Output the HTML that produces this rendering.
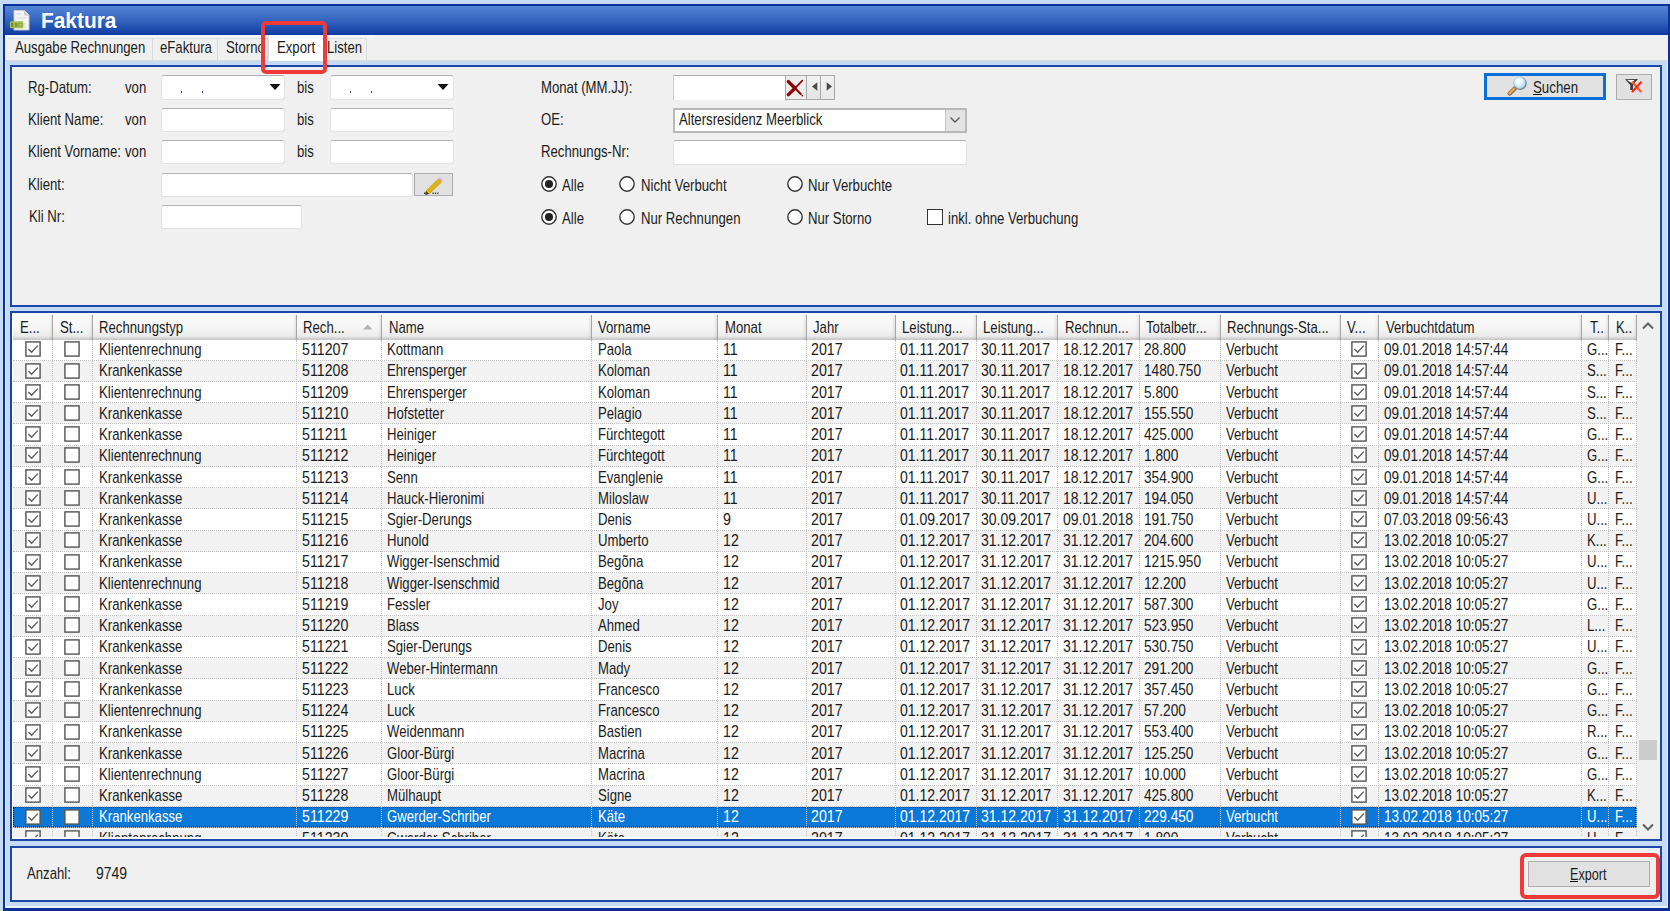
<!DOCTYPE html>
<html><head><meta charset="utf-8"><title>Faktura</title>
<style>
html,body{margin:0;padding:0;width:1670px;height:911px;overflow:hidden;background:#c5daf5}
body{position:relative;font-family:"Liberation Sans",sans-serif}
.r{position:absolute}
.t{position:absolute;white-space:nowrap;line-height:1;transform-origin:0 0}
</style></head><body>
<div class="r" style="left:0px;top:0px;width:1670px;height:911px;background:#c5daf5"></div>
<div class="r" style="left:3px;top:4px;width:1667px;height:907px;background:#0b3196"></div>
<div class="r" style="left:5px;top:6px;width:1663px;height:29px;background:linear-gradient(#5585d4,#3d6ec6 35%,#2455b3 70%,#0e3aa0)"></div>
<div class="r" style="left:5px;top:35px;width:1663px;height:873px;background:#c5daf5"></div>
<div class="r" style="left:5px;top:35px;width:1663px;height:26px;background:#f0f0f0"></div>
<div class="r" style="left:5px;top:35px;width:370px;height:3px;background:#f5f5f5"></div>
<div class="r" style="left:5px;top:60px;width:1663px;height:1px;background:#dadada"></div>
<div class="r" style="left:5px;top:61px;width:1px;height:847px;background:#eef3fb"></div>
<div class="r" style="left:1667px;top:35px;width:1px;height:873px;background:#e9eef6"></div>
<div class="r" style="left:5px;top:906px;width:1663px;height:2px;background:#eef3fb"></div>
<svg class="r" style="left:8px;top:9px" width="24" height="24" viewBox="0 0 24 24">
<path d="M6 1.5 H16.5 L21 6 V21 H6 Z" fill="#f4f4f4" stroke="#c9c9c9" stroke-width="1"/>
<path d="M16.5 1.5 V6 H21" fill="#dcdcdc" stroke="#c9c9c9" stroke-width="1"/>
<path d="M8.5 5 H13 M8.5 9 H18 M8.5 15 H18 M8.5 18 H18" stroke="#d6d6d6" stroke-width="1"/>
<rect x="1.9" y="12.2" width="13.4" height="7" rx="1.2" fill="#a3bd52"/>
<path d="M3.2 13.8 V17.8 H4.6 Q6 15.8 4.6 13.8 Z" fill="#6c8a22"/>
<rect x="7" y="14" width="2.6" height="3.6" fill="#7f9a33"/>
<rect x="10.6" y="14" width="3.4" height="3.6" fill="#8aa53c"/>
<rect x="11.4" y="14.9" width="1.8" height="1.8" fill="#b7cf6a"/>
</svg>
<div class="t" style="left:41.00px;top:9.64px;font-size:21.2px;color:#ffffff;transform:scaleX(0.985);font-weight:700;">Faktura</div>
<div class="r" style="left:8px;top:38px;width:145px;height:22px;background:#f0f0f0;border-top:1px solid #dadada;border-right:1px solid #dadada;box-sizing:border-box"></div>
<div class="r" style="left:153px;top:38px;width:65px;height:22px;background:#f0f0f0;border-top:1px solid #dadada;border-right:1px solid #dadada;box-sizing:border-box"></div>
<div class="r" style="left:218px;top:38px;width:50px;height:22px;background:#f0f0f0;border-top:1px solid #dadada;border-right:1px solid #dadada;box-sizing:border-box"></div>
<div class="r" style="left:268px;top:35px;width:55px;height:26px;background:#ffffff;border-left:1px solid #d9d9d9;box-sizing:border-box"></div>
<div class="r" style="left:323px;top:38px;width:44px;height:22px;background:#f0f0f0;border-top:1px solid #dadada;border-right:1px solid #dadada;box-sizing:border-box"></div>
<div class="t" style="left:14.80px;top:40.30px;font-size:15.7px;color:#1b1b1b;transform:scaleX(0.839);font-weight:400;">Ausgabe Rechnungen</div>
<div class="t" style="left:159.60px;top:40.30px;font-size:15.7px;color:#1b1b1b;transform:scaleX(0.839);font-weight:400;">eFaktura</div>
<div class="t" style="left:225.50px;top:40.30px;font-size:15.7px;color:#1b1b1b;transform:scaleX(0.839);font-weight:400;">Storno</div>
<div class="t" style="left:276.90px;top:40.30px;font-size:15.7px;color:#1b1b1b;transform:scaleX(0.839);font-weight:400;">Export</div>
<div class="t" style="left:326.70px;top:40.30px;font-size:15.7px;color:#1b1b1b;transform:scaleX(0.839);font-weight:400;">Listen</div>
<div class="r" style="left:10px;top:65px;width:1652px;height:241.5px;background:#f0f0f0;border:2px solid #1c46a7;box-sizing:border-box"></div>
<div class="r" style="left:10px;top:311px;width:1652px;height:530px;background:#ffffff;border:2px solid #1c46a7;box-sizing:border-box"></div>
<div class="r" style="left:10px;top:846px;width:1652px;height:56px;background:#f0f0f0;border:2px solid #1c46a7;box-sizing:border-box"></div>
<div class="t" style="left:27.70px;top:79.70px;font-size:15.7px;color:#1b1b1b;transform:scaleX(0.839);font-weight:400;">Rg-Datum:</div>
<div class="t" style="left:125.40px;top:79.70px;font-size:15.7px;color:#1b1b1b;transform:scaleX(0.839);font-weight:400;">von</div>
<div class="t" style="left:27.70px;top:111.70px;font-size:15.7px;color:#1b1b1b;transform:scaleX(0.839);font-weight:400;">Klient Name:</div>
<div class="t" style="left:125.40px;top:111.70px;font-size:15.7px;color:#1b1b1b;transform:scaleX(0.839);font-weight:400;">von</div>
<div class="t" style="left:27.70px;top:144.10px;font-size:15.7px;color:#1b1b1b;transform:scaleX(0.839);font-weight:400;">Klient Vorname:</div>
<div class="t" style="left:125.40px;top:144.10px;font-size:15.7px;color:#1b1b1b;transform:scaleX(0.839);font-weight:400;">von</div>
<div class="t" style="left:27.70px;top:176.50px;font-size:15.7px;color:#1b1b1b;transform:scaleX(0.839);font-weight:400;">Klient:</div>
<div class="t" style="left:28.70px;top:209.10px;font-size:15.7px;color:#1b1b1b;transform:scaleX(0.839);font-weight:400;">Kli Nr:</div>
<div class="t" style="left:297.30px;top:79.70px;font-size:15.7px;color:#1b1b1b;transform:scaleX(0.839);font-weight:400;">bis</div>
<div class="t" style="left:297.30px;top:111.70px;font-size:15.7px;color:#1b1b1b;transform:scaleX(0.839);font-weight:400;">bis</div>
<div class="t" style="left:297.30px;top:144.10px;font-size:15.7px;color:#1b1b1b;transform:scaleX(0.839);font-weight:400;">bis</div>
<div class="r" style="left:161px;top:75px;width:124px;height:25px;background:#fff;border:1px solid #dfe3e8;border-top:1.5px solid #b3b3b3;border-radius:3px;box-sizing:border-box"></div>
<div class="r" style="left:330px;top:75px;width:124px;height:25px;background:#fff;border:1px solid #dfe3e8;border-top:1.5px solid #b3b3b3;border-radius:3px;box-sizing:border-box"></div>
<div class="r" style="left:161px;top:108px;width:124px;height:24px;background:#fff;border:1px solid #dfe3e8;border-top:1.5px solid #b3b3b3;border-radius:3px;box-sizing:border-box"></div>
<div class="r" style="left:330px;top:108px;width:124px;height:24px;background:#fff;border:1px solid #dfe3e8;border-top:1.5px solid #b3b3b3;border-radius:3px;box-sizing:border-box"></div>
<div class="r" style="left:161px;top:140px;width:124px;height:24px;background:#fff;border:1px solid #dfe3e8;border-top:1.5px solid #b3b3b3;border-radius:3px;box-sizing:border-box"></div>
<div class="r" style="left:330px;top:140px;width:124px;height:24px;background:#fff;border:1px solid #dfe3e8;border-top:1.5px solid #b3b3b3;border-radius:3px;box-sizing:border-box"></div>
<div class="r" style="left:161px;top:173px;width:252px;height:24px;background:#fff;border:1px solid #dfe3e8;border-top:1.5px solid #b3b3b3;border-radius:3px;box-sizing:border-box"></div>
<div class="r" style="left:161px;top:205px;width:141px;height:24px;background:#fff;border:1px solid #dfe3e8;border-top:1.5px solid #b3b3b3;border-radius:3px;box-sizing:border-box"></div>
<svg class="r" style="left:269px;top:83px" width="12" height="8" viewBox="0 0 12 8"><path d="M0.5 1 H11.5 L6 7 Z" fill="#111"/></svg>
<svg class="r" style="left:437px;top:83px" width="12" height="8" viewBox="0 0 12 8"><path d="M0.5 1 H11.5 L6 7 Z" fill="#111"/></svg>
<div class="r" style="left:180.65px;top:91px;width:1.6px;height:1.6px;background:#5a3a70"></div>
<div class="r" style="left:201.65px;top:91px;width:1.6px;height:1.6px;background:#5a3a70"></div>
<div class="r" style="left:349.75px;top:91px;width:1.6px;height:1.6px;background:#5a3a70"></div>
<div class="r" style="left:370.75px;top:91px;width:1.6px;height:1.6px;background:#5a3a70"></div>
<div class="r" style="left:414px;top:173px;width:39px;height:23px;background:#e1e1e1;border:1px solid #adadad;box-sizing:border-box"></div>
<svg class="r" style="left:420px;top:174px" width="28" height="22" viewBox="0 0 28 22">
<path d="M9.02 20.09 L5.98 16.91 L18.48 4.91 L21.52 8.09 Z" fill="#e3b20c" stroke="#b38600" stroke-width="0.5"/>
<path d="M18.48 4.91 L19.92 3.52 L22.96 6.70 L21.52 8.09 Z" fill="#e8a0c8"/>
<path d="M9.02 20.09 L5.98 16.91 L5.2 20.9 Z" fill="#4a3a10"/>
<rect x="4" y="18.6" width="1.6" height="1.3" fill="#222"/>
<rect x="12.5" y="18.6" width="1.4" height="1.3" fill="#333"/>
<rect x="14.8" y="18.6" width="1.4" height="1.3" fill="#333"/>
<rect x="17.1" y="18.6" width="1.4" height="1.3" fill="#333"/>
</svg>
<div class="t" style="left:541.10px;top:80.00px;font-size:15.7px;color:#1b1b1b;transform:scaleX(0.839);font-weight:400;">Monat (MM.JJ):</div>
<div class="t" style="left:541.10px;top:112.10px;font-size:15.7px;color:#1b1b1b;transform:scaleX(0.839);font-weight:400;">OE:</div>
<div class="t" style="left:541.10px;top:144.40px;font-size:15.7px;color:#1b1b1b;transform:scaleX(0.839);font-weight:400;">Rechnungs-Nr:</div>
<div class="r" style="left:673px;top:75px;width:112px;height:25px;background:#fff;border-top:1.5px solid #a9a9a9;border-left:1px solid #d0d0d0;box-sizing:border-box"></div>
<div class="r" style="left:785px;top:75px;width:22px;height:25px;background:#eeeeee;border:1px solid #a8a8a8;box-sizing:border-box"></div>
<svg class="r" style="left:786px;top:79px" width="19" height="18" viewBox="0 0 19 18"><g stroke="#8c0606" stroke-linecap="round"><path d="M2.4 2.6 L9 9.2" stroke-width="3.4"/><path d="M8.5 8.7 L14.8 15" stroke-width="2"/><path d="M2.4 15.6 L9 9.2" stroke-width="3.4"/><path d="M8.5 9.7 L15.6 2.4" stroke-width="1.7"/></g><circle cx="16.3" cy="16.6" r="0.9" fill="#8c0606"/><circle cx="16.2" cy="1.6" r="0.9" fill="#8c0606"/></svg>
<div class="r" style="left:806px;top:75px;width:15px;height:25px;background:linear-gradient(#f2f2f2,#e4e4e4);border:1px solid #a8a8a8;box-sizing:border-box"></div>
<div class="r" style="left:820px;top:75px;width:15px;height:25px;background:linear-gradient(#f2f2f2,#e9e9e9);border:1px solid #a8a8a8;box-sizing:border-box"></div>
<svg class="r" style="left:810px;top:81px" width="10" height="12" viewBox="0 0 10 12"><path d="M7.3 1.2 L7.3 9.8 L2 5.5 Z" fill="#4a4a4a"/></svg>
<svg class="r" style="left:824px;top:81px" width="10" height="12" viewBox="0 0 10 12"><path d="M2.7 1.2 L2.7 9.8 L8 5.5 Z" fill="#4a4a4a"/></svg>
<div class="r" style="left:673px;top:108px;width:294px;height:25px;background:#fff;border:2px solid #b8b8b8;box-sizing:border-box"></div>
<div class="r" style="left:945px;top:110px;width:20px;height:21px;background:#e3e3e3;border-left:1px solid #c8c8c8;box-sizing:border-box"></div>
<svg class="r" style="left:949px;top:116px" width="12" height="8" viewBox="0 0 12 8"><path d="M1.5 1.5 L6 6 L10.5 1.5" fill="none" stroke="#555" stroke-width="1.3"/></svg>
<div class="t" style="left:678.90px;top:112.00px;font-size:15.7px;color:#1b1b1b;transform:scaleX(0.839);font-weight:400;">Altersresidenz Meerblick</div>
<div class="r" style="left:673px;top:140px;width:294px;height:25px;background:#fff;border:1px solid #dfe3e8;border-top:1.5px solid #b3b3b3;border-radius:3px;box-sizing:border-box"></div>
<svg class="r" style="left:541px;top:176px" width="16" height="16" viewBox="0 0 16 16"><circle cx="8" cy="8" r="7.2" fill="#fff" stroke="#333" stroke-width="1.4"/><circle cx="8" cy="8" r="4" fill="#222"/></svg>
<div class="t" style="left:562.30px;top:178.10px;font-size:15.7px;color:#1b1b1b;transform:scaleX(0.839);font-weight:400;">Alle</div>
<svg class="r" style="left:619px;top:176px" width="16" height="16" viewBox="0 0 16 16"><circle cx="8" cy="8" r="7.2" fill="#fff" stroke="#333" stroke-width="1.4"/></svg>
<div class="t" style="left:641.00px;top:178.10px;font-size:15.7px;color:#1b1b1b;transform:scaleX(0.839);font-weight:400;">Nicht Verbucht</div>
<svg class="r" style="left:787px;top:176px" width="16" height="16" viewBox="0 0 16 16"><circle cx="8" cy="8" r="7.2" fill="#fff" stroke="#333" stroke-width="1.4"/></svg>
<div class="t" style="left:808.40px;top:178.10px;font-size:15.7px;color:#1b1b1b;transform:scaleX(0.839);font-weight:400;">Nur Verbuchte</div>
<svg class="r" style="left:541px;top:209px" width="16" height="16" viewBox="0 0 16 16"><circle cx="8" cy="8" r="7.2" fill="#fff" stroke="#333" stroke-width="1.4"/><circle cx="8" cy="8" r="4" fill="#222"/></svg>
<div class="t" style="left:562.30px;top:210.60px;font-size:15.7px;color:#1b1b1b;transform:scaleX(0.839);font-weight:400;">Alle</div>
<svg class="r" style="left:619px;top:209px" width="16" height="16" viewBox="0 0 16 16"><circle cx="8" cy="8" r="7.2" fill="#fff" stroke="#333" stroke-width="1.4"/></svg>
<div class="t" style="left:641.00px;top:210.60px;font-size:15.7px;color:#1b1b1b;transform:scaleX(0.839);font-weight:400;">Nur Rechnungen</div>
<svg class="r" style="left:787px;top:209px" width="16" height="16" viewBox="0 0 16 16"><circle cx="8" cy="8" r="7.2" fill="#fff" stroke="#333" stroke-width="1.4"/></svg>
<div class="t" style="left:808.40px;top:210.60px;font-size:15.7px;color:#1b1b1b;transform:scaleX(0.839);font-weight:400;">Nur Storno</div>
<div class="r" style="left:927px;top:209px;width:16px;height:16px;background:#fff;border:1.5px solid #333;box-sizing:border-box"></div>
<div class="t" style="left:947.50px;top:210.60px;font-size:15.7px;color:#1b1b1b;transform:scaleX(0.839);font-weight:400;">inkl. ohne Verbuchung</div>
<div class="r" style="left:1484px;top:73px;width:122px;height:27px;background:#e1e1e1;border:3px solid #0a6fd6;box-sizing:border-box"></div>
<svg class="r" style="left:1504px;top:74px" width="26" height="24" viewBox="0 0 26 24">
<defs><radialGradient id="lg" cx="0.4" cy="0.35" r="0.7"><stop offset="0" stop-color="#ffffff"/><stop offset="0.5" stop-color="#e2f4fd"/><stop offset="1" stop-color="#a9d2ef"/></radialGradient></defs>
<path d="M5.6 19.6 L11 14.2" stroke="#6e6470" stroke-width="4.2" stroke-linecap="round"/>
<path d="M5.4 19.4 L10.2 14.6" stroke="#f6a53c" stroke-width="2.6" stroke-linecap="round"/>
<circle cx="16.2" cy="9.3" r="6.6" fill="#7d8792"/>
<circle cx="15.6" cy="8.7" r="5.6" fill="url(#lg)" stroke="#bcd3e6" stroke-width="0.8"/>
</svg>
<div class="t" style="left:1533.30px;top:78.82px;font-size:16.5px;color:#1b1b1b;transform:scaleX(0.805);font-weight:400;">Suchen</div>
<div class="r" style="left:1533.3px;top:94px;width:8.6px;height:1.2px;background:#111"></div>
<div class="r" style="left:1616px;top:74px;width:36px;height:26px;background:#e1e1e1;border:1px solid #adadad;box-sizing:border-box"></div>
<svg class="r" style="left:1622px;top:76px" width="24" height="20" viewBox="0 0 24 20">
<path d="M3 3.2 L16 3 L11.2 8.5 L10.8 14 L8.3 14 L8.3 9 Z" fill="#3a3a3a"/>
<path d="M5 4.1 L12.5 4.1 L9.9 7.2 Z" fill="#fafafa"/>
<path d="M10.6 6.4 L18.8 15.4" stroke="#ff5a30" stroke-width="2.3" stroke-linecap="round"/>
<path d="M18.8 6.4 L10.6 15.4" stroke="#ff2a0a" stroke-width="2.3" stroke-linecap="round"/>
</svg>
<div class="r" style="left:13px;top:313px;width:1623.5px;height:26.5px;background:linear-gradient(#fbfbfb,#f6f6f6 55%,#ebebeb 86%,#d2d2d2 94%,#c4c4c4)"></div>
<div class="r" style="left:48.5px;top:314.5px;width:3.5px;height:25px;background:linear-gradient(90deg,rgba(0,0,0,0),rgba(0,0,0,0.08))"></div>
<div class="r" style="left:52.0px;top:314.5px;width:1.2px;height:25px;background:#a6a6a6"></div>
<div class="r" style="left:88.5px;top:314.5px;width:3.5px;height:25px;background:linear-gradient(90deg,rgba(0,0,0,0),rgba(0,0,0,0.08))"></div>
<div class="r" style="left:92.0px;top:314.5px;width:1.2px;height:25px;background:#a6a6a6"></div>
<div class="r" style="left:292.5px;top:314.5px;width:3.5px;height:25px;background:linear-gradient(90deg,rgba(0,0,0,0),rgba(0,0,0,0.08))"></div>
<div class="r" style="left:296.0px;top:314.5px;width:1.2px;height:25px;background:#a6a6a6"></div>
<div class="r" style="left:377.5px;top:314.5px;width:3.5px;height:25px;background:linear-gradient(90deg,rgba(0,0,0,0),rgba(0,0,0,0.08))"></div>
<div class="r" style="left:381.0px;top:314.5px;width:1.2px;height:25px;background:#a6a6a6"></div>
<div class="r" style="left:587.5px;top:314.5px;width:3.5px;height:25px;background:linear-gradient(90deg,rgba(0,0,0,0),rgba(0,0,0,0.08))"></div>
<div class="r" style="left:591.0px;top:314.5px;width:1.2px;height:25px;background:#a6a6a6"></div>
<div class="r" style="left:713px;top:314.5px;width:3.5px;height:25px;background:linear-gradient(90deg,rgba(0,0,0,0),rgba(0,0,0,0.08))"></div>
<div class="r" style="left:716.5px;top:314.5px;width:1.2px;height:25px;background:#a6a6a6"></div>
<div class="r" style="left:802px;top:314.5px;width:3.5px;height:25px;background:linear-gradient(90deg,rgba(0,0,0,0),rgba(0,0,0,0.08))"></div>
<div class="r" style="left:805.5px;top:314.5px;width:1.2px;height:25px;background:#a6a6a6"></div>
<div class="r" style="left:891px;top:314.5px;width:3.5px;height:25px;background:linear-gradient(90deg,rgba(0,0,0,0),rgba(0,0,0,0.08))"></div>
<div class="r" style="left:894.5px;top:314.5px;width:1.2px;height:25px;background:#a6a6a6"></div>
<div class="r" style="left:972px;top:314.5px;width:3.5px;height:25px;background:linear-gradient(90deg,rgba(0,0,0,0),rgba(0,0,0,0.08))"></div>
<div class="r" style="left:975.5px;top:314.5px;width:1.2px;height:25px;background:#a6a6a6"></div>
<div class="r" style="left:1053px;top:314.5px;width:3.5px;height:25px;background:linear-gradient(90deg,rgba(0,0,0,0),rgba(0,0,0,0.08))"></div>
<div class="r" style="left:1056.5px;top:314.5px;width:1.2px;height:25px;background:#a6a6a6"></div>
<div class="r" style="left:1135px;top:314.5px;width:3.5px;height:25px;background:linear-gradient(90deg,rgba(0,0,0,0),rgba(0,0,0,0.08))"></div>
<div class="r" style="left:1138.5px;top:314.5px;width:1.2px;height:25px;background:#a6a6a6"></div>
<div class="r" style="left:1216px;top:314.5px;width:3.5px;height:25px;background:linear-gradient(90deg,rgba(0,0,0,0),rgba(0,0,0,0.08))"></div>
<div class="r" style="left:1219.5px;top:314.5px;width:1.2px;height:25px;background:#a6a6a6"></div>
<div class="r" style="left:1336.7px;top:314.5px;width:3.5px;height:25px;background:linear-gradient(90deg,rgba(0,0,0,0),rgba(0,0,0,0.08))"></div>
<div class="r" style="left:1340.2px;top:314.5px;width:1.2px;height:25px;background:#a6a6a6"></div>
<div class="r" style="left:1374.6px;top:314.5px;width:3.5px;height:25px;background:linear-gradient(90deg,rgba(0,0,0,0),rgba(0,0,0,0.08))"></div>
<div class="r" style="left:1378.1px;top:314.5px;width:1.2px;height:25px;background:#a6a6a6"></div>
<div class="r" style="left:1577.5px;top:314.5px;width:3.5px;height:25px;background:linear-gradient(90deg,rgba(0,0,0,0),rgba(0,0,0,0.08))"></div>
<div class="r" style="left:1581.0px;top:314.5px;width:1.2px;height:25px;background:#a6a6a6"></div>
<div class="r" style="left:1604.5px;top:314.5px;width:3.5px;height:25px;background:linear-gradient(90deg,rgba(0,0,0,0),rgba(0,0,0,0.08))"></div>
<div class="r" style="left:1608.0px;top:314.5px;width:1.2px;height:25px;background:#a6a6a6"></div>
<div class="r" style="left:1632.5px;top:314.5px;width:3.5px;height:25px;background:linear-gradient(90deg,rgba(0,0,0,0),rgba(0,0,0,0.08))"></div>
<div class="r" style="left:1636.0px;top:314.5px;width:1.2px;height:25px;background:#a6a6a6"></div>
<div class="t" style="left:20.20px;top:319.50px;font-size:15.7px;color:#1b1b1b;transform:scaleX(0.839);font-weight:400;">E...</div>
<div class="t" style="left:59.50px;top:319.50px;font-size:15.7px;color:#1b1b1b;transform:scaleX(0.839);font-weight:400;">St...</div>
<div class="t" style="left:99.00px;top:319.50px;font-size:15.7px;color:#1b1b1b;transform:scaleX(0.839);font-weight:400;">Rechnungstyp</div>
<div class="t" style="left:303.00px;top:319.50px;font-size:15.7px;color:#1b1b1b;transform:scaleX(0.839);font-weight:400;">Rech...</div>
<div class="t" style="left:388.60px;top:319.50px;font-size:15.7px;color:#1b1b1b;transform:scaleX(0.839);font-weight:400;">Name</div>
<div class="t" style="left:598.30px;top:319.50px;font-size:15.7px;color:#1b1b1b;transform:scaleX(0.839);font-weight:400;">Vorname</div>
<div class="t" style="left:725.00px;top:319.50px;font-size:15.7px;color:#1b1b1b;transform:scaleX(0.839);font-weight:400;">Monat</div>
<div class="t" style="left:812.80px;top:319.50px;font-size:15.7px;color:#1b1b1b;transform:scaleX(0.839);font-weight:400;">Jahr</div>
<div class="t" style="left:902.40px;top:319.50px;font-size:15.7px;color:#1b1b1b;transform:scaleX(0.839);font-weight:400;">Leistung...</div>
<div class="t" style="left:983.30px;top:319.50px;font-size:15.7px;color:#1b1b1b;transform:scaleX(0.839);font-weight:400;">Leistung...</div>
<div class="t" style="left:1065.00px;top:319.50px;font-size:15.7px;color:#1b1b1b;transform:scaleX(0.839);font-weight:400;">Rechnun...</div>
<div class="t" style="left:1146.40px;top:319.50px;font-size:15.7px;color:#1b1b1b;transform:scaleX(0.839);font-weight:400;">Totalbetr...</div>
<div class="t" style="left:1227.00px;top:319.50px;font-size:15.7px;color:#1b1b1b;transform:scaleX(0.839);font-weight:400;">Rechnungs-Sta...</div>
<div class="t" style="left:1347.30px;top:319.50px;font-size:15.7px;color:#1b1b1b;transform:scaleX(0.839);font-weight:400;">V...</div>
<div class="t" style="left:1386.10px;top:319.50px;font-size:15.7px;color:#1b1b1b;transform:scaleX(0.839);font-weight:400;">Verbuchtdatum</div>
<div class="t" style="left:1590.40px;top:319.50px;font-size:15.7px;color:#1b1b1b;transform:scaleX(0.839);font-weight:400;">T..</div>
<div class="t" style="left:1615.70px;top:319.50px;font-size:15.7px;color:#1b1b1b;transform:scaleX(0.839);font-weight:400;">K..</div>
<svg class="r" style="left:363px;top:324px" width="10" height="6" viewBox="0 0 10 6"><path d="M0 5.5 L4.7 0.5 L9.5 5.5 Z" fill="#b3b3b3"/></svg>
<div class="r" style="left:13px;top:339.5px;width:1623.5px;height:497.79999999999995px;overflow:hidden">
<div style="position:absolute;left:0;top:0.00px;width:1623.5px;height:21.24px;background:#ffffff"></div>
<div style="position:absolute;left:0;top:20.24px;width:1623.5px;height:0;border-top:1px dotted #c2c2c2"></div>
<div class="t" style="left:85.80px;top:2.60px;font-size:15.7px;color:#1b1b1b;transform:scaleX(0.839)">Klientenrechnung</div>
<div class="t" style="left:288.60px;top:2.60px;font-size:15.7px;color:#1b1b1b;transform:scaleX(0.90612)">511207</div>
<div class="t" style="left:374.30px;top:2.60px;font-size:15.7px;color:#1b1b1b;transform:scaleX(0.839)">Kottmann</div>
<div class="t" style="left:584.50px;top:2.60px;font-size:15.7px;color:#1b1b1b;transform:scaleX(0.839)">Paola</div>
<div class="t" style="left:710.40px;top:2.60px;font-size:15.7px;color:#1b1b1b;transform:scaleX(0.90612)">11</div>
<div class="t" style="left:798.20px;top:2.60px;font-size:15.7px;color:#1b1b1b;transform:scaleX(0.90612)">2017</div>
<div class="t" style="left:887.00px;top:2.60px;font-size:15.7px;color:#1b1b1b;transform:scaleX(0.893535)">01.11.2017</div>
<div class="t" style="left:968.20px;top:2.60px;font-size:15.7px;color:#1b1b1b;transform:scaleX(0.893535)">30.11.2017</div>
<div class="t" style="left:1049.80px;top:2.60px;font-size:15.7px;color:#1b1b1b;transform:scaleX(0.893535)">18.12.2017</div>
<div class="t" style="left:1131.10px;top:2.60px;font-size:15.7px;color:#1b1b1b;transform:scaleX(0.87256)">28.800</div>
<div class="t" style="left:1213.20px;top:2.60px;font-size:15.7px;color:#1b1b1b;transform:scaleX(0.839)">Verbucht</div>
<div class="t" style="left:1370.50px;top:2.60px;font-size:15.7px;color:#1b1b1b;transform:scaleX(0.86417)">09.01.2018 14:57:44</div>
<div class="t" style="left:1573.70px;top:2.60px;font-size:15.7px;color:#1b1b1b;transform:scaleX(0.839)">G...</div>
<div class="t" style="left:1601.70px;top:2.60px;font-size:15.7px;color:#1b1b1b;transform:scaleX(0.839)">F...</div>
<svg style="position:absolute;left:11.60px;top:1.80px" width="16" height="16" viewBox="0 0 16 16"><rect x="0.9" y="0.9" width="14.2" height="14.2" fill="#fff" stroke="#545454" stroke-width="1.4"/><path d="M3.4 8 L6.6 11.3 L12.8 4.6" fill="none" stroke="#5a5a5a" stroke-width="1.35"/></svg>
<svg style="position:absolute;left:51.40px;top:1.80px" width="16" height="16" viewBox="0 0 16 16"><rect x="0.9" y="0.9" width="14.2" height="14.2" fill="#fff" stroke="#545454" stroke-width="1.4"/></svg>
<svg style="position:absolute;left:1338.20px;top:1.80px" width="16" height="16" viewBox="0 0 16 16"><rect x="0.9" y="0.9" width="14.2" height="14.2" fill="#fff" stroke="#545454" stroke-width="1.4"/><path d="M3.4 8 L6.6 11.3 L12.8 4.6" fill="none" stroke="#5a5a5a" stroke-width="1.35"/></svg>
<div style="position:absolute;left:0;top:21.24px;width:1623.5px;height:21.24px;background:#f2f2f2"></div>
<div style="position:absolute;left:0;top:41.48px;width:1623.5px;height:0;border-top:1px dotted #c2c2c2"></div>
<div class="t" style="left:85.80px;top:23.84px;font-size:15.7px;color:#1b1b1b;transform:scaleX(0.839)">Krankenkasse</div>
<div class="t" style="left:288.60px;top:23.84px;font-size:15.7px;color:#1b1b1b;transform:scaleX(0.90612)">511208</div>
<div class="t" style="left:374.30px;top:23.84px;font-size:15.7px;color:#1b1b1b;transform:scaleX(0.839)">Ehrensperger</div>
<div class="t" style="left:584.50px;top:23.84px;font-size:15.7px;color:#1b1b1b;transform:scaleX(0.839)">Koloman</div>
<div class="t" style="left:710.40px;top:23.84px;font-size:15.7px;color:#1b1b1b;transform:scaleX(0.90612)">11</div>
<div class="t" style="left:798.20px;top:23.84px;font-size:15.7px;color:#1b1b1b;transform:scaleX(0.90612)">2017</div>
<div class="t" style="left:887.00px;top:23.84px;font-size:15.7px;color:#1b1b1b;transform:scaleX(0.893535)">01.11.2017</div>
<div class="t" style="left:968.20px;top:23.84px;font-size:15.7px;color:#1b1b1b;transform:scaleX(0.893535)">30.11.2017</div>
<div class="t" style="left:1049.80px;top:23.84px;font-size:15.7px;color:#1b1b1b;transform:scaleX(0.893535)">18.12.2017</div>
<div class="t" style="left:1131.10px;top:23.84px;font-size:15.7px;color:#1b1b1b;transform:scaleX(0.87256)">1480.750</div>
<div class="t" style="left:1213.20px;top:23.84px;font-size:15.7px;color:#1b1b1b;transform:scaleX(0.839)">Verbucht</div>
<div class="t" style="left:1370.50px;top:23.84px;font-size:15.7px;color:#1b1b1b;transform:scaleX(0.86417)">09.01.2018 14:57:44</div>
<div class="t" style="left:1573.70px;top:23.84px;font-size:15.7px;color:#1b1b1b;transform:scaleX(0.839)">S...</div>
<div class="t" style="left:1601.70px;top:23.84px;font-size:15.7px;color:#1b1b1b;transform:scaleX(0.839)">F...</div>
<svg style="position:absolute;left:11.60px;top:23.04px" width="16" height="16" viewBox="0 0 16 16"><rect x="0.9" y="0.9" width="14.2" height="14.2" fill="#fff" stroke="#545454" stroke-width="1.4"/><path d="M3.4 8 L6.6 11.3 L12.8 4.6" fill="none" stroke="#5a5a5a" stroke-width="1.35"/></svg>
<svg style="position:absolute;left:51.40px;top:23.04px" width="16" height="16" viewBox="0 0 16 16"><rect x="0.9" y="0.9" width="14.2" height="14.2" fill="#fff" stroke="#545454" stroke-width="1.4"/></svg>
<svg style="position:absolute;left:1338.20px;top:23.04px" width="16" height="16" viewBox="0 0 16 16"><rect x="0.9" y="0.9" width="14.2" height="14.2" fill="#fff" stroke="#545454" stroke-width="1.4"/><path d="M3.4 8 L6.6 11.3 L12.8 4.6" fill="none" stroke="#5a5a5a" stroke-width="1.35"/></svg>
<div style="position:absolute;left:0;top:42.48px;width:1623.5px;height:21.24px;background:#ffffff"></div>
<div style="position:absolute;left:0;top:62.71px;width:1623.5px;height:0;border-top:1px dotted #c2c2c2"></div>
<div class="t" style="left:85.80px;top:45.08px;font-size:15.7px;color:#1b1b1b;transform:scaleX(0.839)">Klientenrechnung</div>
<div class="t" style="left:288.60px;top:45.08px;font-size:15.7px;color:#1b1b1b;transform:scaleX(0.90612)">511209</div>
<div class="t" style="left:374.30px;top:45.08px;font-size:15.7px;color:#1b1b1b;transform:scaleX(0.839)">Ehrensperger</div>
<div class="t" style="left:584.50px;top:45.08px;font-size:15.7px;color:#1b1b1b;transform:scaleX(0.839)">Koloman</div>
<div class="t" style="left:710.40px;top:45.08px;font-size:15.7px;color:#1b1b1b;transform:scaleX(0.90612)">11</div>
<div class="t" style="left:798.20px;top:45.08px;font-size:15.7px;color:#1b1b1b;transform:scaleX(0.90612)">2017</div>
<div class="t" style="left:887.00px;top:45.08px;font-size:15.7px;color:#1b1b1b;transform:scaleX(0.893535)">01.11.2017</div>
<div class="t" style="left:968.20px;top:45.08px;font-size:15.7px;color:#1b1b1b;transform:scaleX(0.893535)">30.11.2017</div>
<div class="t" style="left:1049.80px;top:45.08px;font-size:15.7px;color:#1b1b1b;transform:scaleX(0.893535)">18.12.2017</div>
<div class="t" style="left:1131.10px;top:45.08px;font-size:15.7px;color:#1b1b1b;transform:scaleX(0.87256)">5.800</div>
<div class="t" style="left:1213.20px;top:45.08px;font-size:15.7px;color:#1b1b1b;transform:scaleX(0.839)">Verbucht</div>
<div class="t" style="left:1370.50px;top:45.08px;font-size:15.7px;color:#1b1b1b;transform:scaleX(0.86417)">09.01.2018 14:57:44</div>
<div class="t" style="left:1573.70px;top:45.08px;font-size:15.7px;color:#1b1b1b;transform:scaleX(0.839)">S...</div>
<div class="t" style="left:1601.70px;top:45.08px;font-size:15.7px;color:#1b1b1b;transform:scaleX(0.839)">F...</div>
<svg style="position:absolute;left:11.60px;top:44.28px" width="16" height="16" viewBox="0 0 16 16"><rect x="0.9" y="0.9" width="14.2" height="14.2" fill="#fff" stroke="#545454" stroke-width="1.4"/><path d="M3.4 8 L6.6 11.3 L12.8 4.6" fill="none" stroke="#5a5a5a" stroke-width="1.35"/></svg>
<svg style="position:absolute;left:51.40px;top:44.28px" width="16" height="16" viewBox="0 0 16 16"><rect x="0.9" y="0.9" width="14.2" height="14.2" fill="#fff" stroke="#545454" stroke-width="1.4"/></svg>
<svg style="position:absolute;left:1338.20px;top:44.28px" width="16" height="16" viewBox="0 0 16 16"><rect x="0.9" y="0.9" width="14.2" height="14.2" fill="#fff" stroke="#545454" stroke-width="1.4"/><path d="M3.4 8 L6.6 11.3 L12.8 4.6" fill="none" stroke="#5a5a5a" stroke-width="1.35"/></svg>
<div style="position:absolute;left:0;top:63.71px;width:1623.5px;height:21.24px;background:#f2f2f2"></div>
<div style="position:absolute;left:0;top:83.95px;width:1623.5px;height:0;border-top:1px dotted #c2c2c2"></div>
<div class="t" style="left:85.80px;top:66.32px;font-size:15.7px;color:#1b1b1b;transform:scaleX(0.839)">Krankenkasse</div>
<div class="t" style="left:288.60px;top:66.32px;font-size:15.7px;color:#1b1b1b;transform:scaleX(0.90612)">511210</div>
<div class="t" style="left:374.30px;top:66.32px;font-size:15.7px;color:#1b1b1b;transform:scaleX(0.839)">Hofstetter</div>
<div class="t" style="left:584.50px;top:66.32px;font-size:15.7px;color:#1b1b1b;transform:scaleX(0.839)">Pelagio</div>
<div class="t" style="left:710.40px;top:66.32px;font-size:15.7px;color:#1b1b1b;transform:scaleX(0.90612)">11</div>
<div class="t" style="left:798.20px;top:66.32px;font-size:15.7px;color:#1b1b1b;transform:scaleX(0.90612)">2017</div>
<div class="t" style="left:887.00px;top:66.32px;font-size:15.7px;color:#1b1b1b;transform:scaleX(0.893535)">01.11.2017</div>
<div class="t" style="left:968.20px;top:66.32px;font-size:15.7px;color:#1b1b1b;transform:scaleX(0.893535)">30.11.2017</div>
<div class="t" style="left:1049.80px;top:66.32px;font-size:15.7px;color:#1b1b1b;transform:scaleX(0.893535)">18.12.2017</div>
<div class="t" style="left:1131.10px;top:66.32px;font-size:15.7px;color:#1b1b1b;transform:scaleX(0.87256)">155.550</div>
<div class="t" style="left:1213.20px;top:66.32px;font-size:15.7px;color:#1b1b1b;transform:scaleX(0.839)">Verbucht</div>
<div class="t" style="left:1370.50px;top:66.32px;font-size:15.7px;color:#1b1b1b;transform:scaleX(0.86417)">09.01.2018 14:57:44</div>
<div class="t" style="left:1573.70px;top:66.32px;font-size:15.7px;color:#1b1b1b;transform:scaleX(0.839)">S...</div>
<div class="t" style="left:1601.70px;top:66.32px;font-size:15.7px;color:#1b1b1b;transform:scaleX(0.839)">F...</div>
<svg style="position:absolute;left:11.60px;top:65.51px" width="16" height="16" viewBox="0 0 16 16"><rect x="0.9" y="0.9" width="14.2" height="14.2" fill="#fff" stroke="#545454" stroke-width="1.4"/><path d="M3.4 8 L6.6 11.3 L12.8 4.6" fill="none" stroke="#5a5a5a" stroke-width="1.35"/></svg>
<svg style="position:absolute;left:51.40px;top:65.51px" width="16" height="16" viewBox="0 0 16 16"><rect x="0.9" y="0.9" width="14.2" height="14.2" fill="#fff" stroke="#545454" stroke-width="1.4"/></svg>
<svg style="position:absolute;left:1338.20px;top:65.51px" width="16" height="16" viewBox="0 0 16 16"><rect x="0.9" y="0.9" width="14.2" height="14.2" fill="#fff" stroke="#545454" stroke-width="1.4"/><path d="M3.4 8 L6.6 11.3 L12.8 4.6" fill="none" stroke="#5a5a5a" stroke-width="1.35"/></svg>
<div style="position:absolute;left:0;top:84.95px;width:1623.5px;height:21.24px;background:#ffffff"></div>
<div style="position:absolute;left:0;top:105.19px;width:1623.5px;height:0;border-top:1px dotted #c2c2c2"></div>
<div class="t" style="left:85.80px;top:87.55px;font-size:15.7px;color:#1b1b1b;transform:scaleX(0.839)">Krankenkasse</div>
<div class="t" style="left:288.60px;top:87.55px;font-size:15.7px;color:#1b1b1b;transform:scaleX(0.90612)">511211</div>
<div class="t" style="left:374.30px;top:87.55px;font-size:15.7px;color:#1b1b1b;transform:scaleX(0.839)">Heiniger</div>
<div class="t" style="left:584.50px;top:87.55px;font-size:15.7px;color:#1b1b1b;transform:scaleX(0.839)">Fürchtegott</div>
<div class="t" style="left:710.40px;top:87.55px;font-size:15.7px;color:#1b1b1b;transform:scaleX(0.90612)">11</div>
<div class="t" style="left:798.20px;top:87.55px;font-size:15.7px;color:#1b1b1b;transform:scaleX(0.90612)">2017</div>
<div class="t" style="left:887.00px;top:87.55px;font-size:15.7px;color:#1b1b1b;transform:scaleX(0.893535)">01.11.2017</div>
<div class="t" style="left:968.20px;top:87.55px;font-size:15.7px;color:#1b1b1b;transform:scaleX(0.893535)">30.11.2017</div>
<div class="t" style="left:1049.80px;top:87.55px;font-size:15.7px;color:#1b1b1b;transform:scaleX(0.893535)">18.12.2017</div>
<div class="t" style="left:1131.10px;top:87.55px;font-size:15.7px;color:#1b1b1b;transform:scaleX(0.87256)">425.000</div>
<div class="t" style="left:1213.20px;top:87.55px;font-size:15.7px;color:#1b1b1b;transform:scaleX(0.839)">Verbucht</div>
<div class="t" style="left:1370.50px;top:87.55px;font-size:15.7px;color:#1b1b1b;transform:scaleX(0.86417)">09.01.2018 14:57:44</div>
<div class="t" style="left:1573.70px;top:87.55px;font-size:15.7px;color:#1b1b1b;transform:scaleX(0.839)">G...</div>
<div class="t" style="left:1601.70px;top:87.55px;font-size:15.7px;color:#1b1b1b;transform:scaleX(0.839)">F...</div>
<svg style="position:absolute;left:11.60px;top:86.75px" width="16" height="16" viewBox="0 0 16 16"><rect x="0.9" y="0.9" width="14.2" height="14.2" fill="#fff" stroke="#545454" stroke-width="1.4"/><path d="M3.4 8 L6.6 11.3 L12.8 4.6" fill="none" stroke="#5a5a5a" stroke-width="1.35"/></svg>
<svg style="position:absolute;left:51.40px;top:86.75px" width="16" height="16" viewBox="0 0 16 16"><rect x="0.9" y="0.9" width="14.2" height="14.2" fill="#fff" stroke="#545454" stroke-width="1.4"/></svg>
<svg style="position:absolute;left:1338.20px;top:86.75px" width="16" height="16" viewBox="0 0 16 16"><rect x="0.9" y="0.9" width="14.2" height="14.2" fill="#fff" stroke="#545454" stroke-width="1.4"/><path d="M3.4 8 L6.6 11.3 L12.8 4.6" fill="none" stroke="#5a5a5a" stroke-width="1.35"/></svg>
<div style="position:absolute;left:0;top:106.19px;width:1623.5px;height:21.24px;background:#f2f2f2"></div>
<div style="position:absolute;left:0;top:126.43px;width:1623.5px;height:0;border-top:1px dotted #c2c2c2"></div>
<div class="t" style="left:85.80px;top:108.79px;font-size:15.7px;color:#1b1b1b;transform:scaleX(0.839)">Klientenrechnung</div>
<div class="t" style="left:288.60px;top:108.79px;font-size:15.7px;color:#1b1b1b;transform:scaleX(0.90612)">511212</div>
<div class="t" style="left:374.30px;top:108.79px;font-size:15.7px;color:#1b1b1b;transform:scaleX(0.839)">Heiniger</div>
<div class="t" style="left:584.50px;top:108.79px;font-size:15.7px;color:#1b1b1b;transform:scaleX(0.839)">Fürchtegott</div>
<div class="t" style="left:710.40px;top:108.79px;font-size:15.7px;color:#1b1b1b;transform:scaleX(0.90612)">11</div>
<div class="t" style="left:798.20px;top:108.79px;font-size:15.7px;color:#1b1b1b;transform:scaleX(0.90612)">2017</div>
<div class="t" style="left:887.00px;top:108.79px;font-size:15.7px;color:#1b1b1b;transform:scaleX(0.893535)">01.11.2017</div>
<div class="t" style="left:968.20px;top:108.79px;font-size:15.7px;color:#1b1b1b;transform:scaleX(0.893535)">30.11.2017</div>
<div class="t" style="left:1049.80px;top:108.79px;font-size:15.7px;color:#1b1b1b;transform:scaleX(0.893535)">18.12.2017</div>
<div class="t" style="left:1131.10px;top:108.79px;font-size:15.7px;color:#1b1b1b;transform:scaleX(0.87256)">1.800</div>
<div class="t" style="left:1213.20px;top:108.79px;font-size:15.7px;color:#1b1b1b;transform:scaleX(0.839)">Verbucht</div>
<div class="t" style="left:1370.50px;top:108.79px;font-size:15.7px;color:#1b1b1b;transform:scaleX(0.86417)">09.01.2018 14:57:44</div>
<div class="t" style="left:1573.70px;top:108.79px;font-size:15.7px;color:#1b1b1b;transform:scaleX(0.839)">G...</div>
<div class="t" style="left:1601.70px;top:108.79px;font-size:15.7px;color:#1b1b1b;transform:scaleX(0.839)">F...</div>
<svg style="position:absolute;left:11.60px;top:107.99px" width="16" height="16" viewBox="0 0 16 16"><rect x="0.9" y="0.9" width="14.2" height="14.2" fill="#fff" stroke="#545454" stroke-width="1.4"/><path d="M3.4 8 L6.6 11.3 L12.8 4.6" fill="none" stroke="#5a5a5a" stroke-width="1.35"/></svg>
<svg style="position:absolute;left:51.40px;top:107.99px" width="16" height="16" viewBox="0 0 16 16"><rect x="0.9" y="0.9" width="14.2" height="14.2" fill="#fff" stroke="#545454" stroke-width="1.4"/></svg>
<svg style="position:absolute;left:1338.20px;top:107.99px" width="16" height="16" viewBox="0 0 16 16"><rect x="0.9" y="0.9" width="14.2" height="14.2" fill="#fff" stroke="#545454" stroke-width="1.4"/><path d="M3.4 8 L6.6 11.3 L12.8 4.6" fill="none" stroke="#5a5a5a" stroke-width="1.35"/></svg>
<div style="position:absolute;left:0;top:127.43px;width:1623.5px;height:21.24px;background:#ffffff"></div>
<div style="position:absolute;left:0;top:147.67px;width:1623.5px;height:0;border-top:1px dotted #c2c2c2"></div>
<div class="t" style="left:85.80px;top:130.03px;font-size:15.7px;color:#1b1b1b;transform:scaleX(0.839)">Krankenkasse</div>
<div class="t" style="left:288.60px;top:130.03px;font-size:15.7px;color:#1b1b1b;transform:scaleX(0.90612)">511213</div>
<div class="t" style="left:374.30px;top:130.03px;font-size:15.7px;color:#1b1b1b;transform:scaleX(0.839)">Senn</div>
<div class="t" style="left:584.50px;top:130.03px;font-size:15.7px;color:#1b1b1b;transform:scaleX(0.839)">Evanglenie</div>
<div class="t" style="left:710.40px;top:130.03px;font-size:15.7px;color:#1b1b1b;transform:scaleX(0.90612)">11</div>
<div class="t" style="left:798.20px;top:130.03px;font-size:15.7px;color:#1b1b1b;transform:scaleX(0.90612)">2017</div>
<div class="t" style="left:887.00px;top:130.03px;font-size:15.7px;color:#1b1b1b;transform:scaleX(0.893535)">01.11.2017</div>
<div class="t" style="left:968.20px;top:130.03px;font-size:15.7px;color:#1b1b1b;transform:scaleX(0.893535)">30.11.2017</div>
<div class="t" style="left:1049.80px;top:130.03px;font-size:15.7px;color:#1b1b1b;transform:scaleX(0.893535)">18.12.2017</div>
<div class="t" style="left:1131.10px;top:130.03px;font-size:15.7px;color:#1b1b1b;transform:scaleX(0.87256)">354.900</div>
<div class="t" style="left:1213.20px;top:130.03px;font-size:15.7px;color:#1b1b1b;transform:scaleX(0.839)">Verbucht</div>
<div class="t" style="left:1370.50px;top:130.03px;font-size:15.7px;color:#1b1b1b;transform:scaleX(0.86417)">09.01.2018 14:57:44</div>
<div class="t" style="left:1573.70px;top:130.03px;font-size:15.7px;color:#1b1b1b;transform:scaleX(0.839)">G...</div>
<div class="t" style="left:1601.70px;top:130.03px;font-size:15.7px;color:#1b1b1b;transform:scaleX(0.839)">F...</div>
<svg style="position:absolute;left:11.60px;top:129.23px" width="16" height="16" viewBox="0 0 16 16"><rect x="0.9" y="0.9" width="14.2" height="14.2" fill="#fff" stroke="#545454" stroke-width="1.4"/><path d="M3.4 8 L6.6 11.3 L12.8 4.6" fill="none" stroke="#5a5a5a" stroke-width="1.35"/></svg>
<svg style="position:absolute;left:51.40px;top:129.23px" width="16" height="16" viewBox="0 0 16 16"><rect x="0.9" y="0.9" width="14.2" height="14.2" fill="#fff" stroke="#545454" stroke-width="1.4"/></svg>
<svg style="position:absolute;left:1338.20px;top:129.23px" width="16" height="16" viewBox="0 0 16 16"><rect x="0.9" y="0.9" width="14.2" height="14.2" fill="#fff" stroke="#545454" stroke-width="1.4"/><path d="M3.4 8 L6.6 11.3 L12.8 4.6" fill="none" stroke="#5a5a5a" stroke-width="1.35"/></svg>
<div style="position:absolute;left:0;top:148.67px;width:1623.5px;height:21.24px;background:#f2f2f2"></div>
<div style="position:absolute;left:0;top:168.90px;width:1623.5px;height:0;border-top:1px dotted #c2c2c2"></div>
<div class="t" style="left:85.80px;top:151.27px;font-size:15.7px;color:#1b1b1b;transform:scaleX(0.839)">Krankenkasse</div>
<div class="t" style="left:288.60px;top:151.27px;font-size:15.7px;color:#1b1b1b;transform:scaleX(0.90612)">511214</div>
<div class="t" style="left:374.30px;top:151.27px;font-size:15.7px;color:#1b1b1b;transform:scaleX(0.839)">Hauck-Hieronimi</div>
<div class="t" style="left:584.50px;top:151.27px;font-size:15.7px;color:#1b1b1b;transform:scaleX(0.839)">Miloslaw</div>
<div class="t" style="left:710.40px;top:151.27px;font-size:15.7px;color:#1b1b1b;transform:scaleX(0.90612)">11</div>
<div class="t" style="left:798.20px;top:151.27px;font-size:15.7px;color:#1b1b1b;transform:scaleX(0.90612)">2017</div>
<div class="t" style="left:887.00px;top:151.27px;font-size:15.7px;color:#1b1b1b;transform:scaleX(0.893535)">01.11.2017</div>
<div class="t" style="left:968.20px;top:151.27px;font-size:15.7px;color:#1b1b1b;transform:scaleX(0.893535)">30.11.2017</div>
<div class="t" style="left:1049.80px;top:151.27px;font-size:15.7px;color:#1b1b1b;transform:scaleX(0.893535)">18.12.2017</div>
<div class="t" style="left:1131.10px;top:151.27px;font-size:15.7px;color:#1b1b1b;transform:scaleX(0.87256)">194.050</div>
<div class="t" style="left:1213.20px;top:151.27px;font-size:15.7px;color:#1b1b1b;transform:scaleX(0.839)">Verbucht</div>
<div class="t" style="left:1370.50px;top:151.27px;font-size:15.7px;color:#1b1b1b;transform:scaleX(0.86417)">09.01.2018 14:57:44</div>
<div class="t" style="left:1573.70px;top:151.27px;font-size:15.7px;color:#1b1b1b;transform:scaleX(0.839)">U...</div>
<div class="t" style="left:1601.70px;top:151.27px;font-size:15.7px;color:#1b1b1b;transform:scaleX(0.839)">F...</div>
<svg style="position:absolute;left:11.60px;top:150.47px" width="16" height="16" viewBox="0 0 16 16"><rect x="0.9" y="0.9" width="14.2" height="14.2" fill="#fff" stroke="#545454" stroke-width="1.4"/><path d="M3.4 8 L6.6 11.3 L12.8 4.6" fill="none" stroke="#5a5a5a" stroke-width="1.35"/></svg>
<svg style="position:absolute;left:51.40px;top:150.47px" width="16" height="16" viewBox="0 0 16 16"><rect x="0.9" y="0.9" width="14.2" height="14.2" fill="#fff" stroke="#545454" stroke-width="1.4"/></svg>
<svg style="position:absolute;left:1338.20px;top:150.47px" width="16" height="16" viewBox="0 0 16 16"><rect x="0.9" y="0.9" width="14.2" height="14.2" fill="#fff" stroke="#545454" stroke-width="1.4"/><path d="M3.4 8 L6.6 11.3 L12.8 4.6" fill="none" stroke="#5a5a5a" stroke-width="1.35"/></svg>
<div style="position:absolute;left:0;top:169.90px;width:1623.5px;height:21.24px;background:#ffffff"></div>
<div style="position:absolute;left:0;top:190.14px;width:1623.5px;height:0;border-top:1px dotted #c2c2c2"></div>
<div class="t" style="left:85.80px;top:172.51px;font-size:15.7px;color:#1b1b1b;transform:scaleX(0.839)">Krankenkasse</div>
<div class="t" style="left:288.60px;top:172.51px;font-size:15.7px;color:#1b1b1b;transform:scaleX(0.90612)">511215</div>
<div class="t" style="left:374.30px;top:172.51px;font-size:15.7px;color:#1b1b1b;transform:scaleX(0.839)">Sgier-Derungs</div>
<div class="t" style="left:584.50px;top:172.51px;font-size:15.7px;color:#1b1b1b;transform:scaleX(0.839)">Denis</div>
<div class="t" style="left:710.40px;top:172.51px;font-size:15.7px;color:#1b1b1b;transform:scaleX(0.90612)">9</div>
<div class="t" style="left:798.20px;top:172.51px;font-size:15.7px;color:#1b1b1b;transform:scaleX(0.90612)">2017</div>
<div class="t" style="left:887.00px;top:172.51px;font-size:15.7px;color:#1b1b1b;transform:scaleX(0.893535)">01.09.2017</div>
<div class="t" style="left:968.20px;top:172.51px;font-size:15.7px;color:#1b1b1b;transform:scaleX(0.893535)">30.09.2017</div>
<div class="t" style="left:1049.80px;top:172.51px;font-size:15.7px;color:#1b1b1b;transform:scaleX(0.893535)">09.01.2018</div>
<div class="t" style="left:1131.10px;top:172.51px;font-size:15.7px;color:#1b1b1b;transform:scaleX(0.87256)">191.750</div>
<div class="t" style="left:1213.20px;top:172.51px;font-size:15.7px;color:#1b1b1b;transform:scaleX(0.839)">Verbucht</div>
<div class="t" style="left:1370.50px;top:172.51px;font-size:15.7px;color:#1b1b1b;transform:scaleX(0.86417)">07.03.2018 09:56:43</div>
<div class="t" style="left:1573.70px;top:172.51px;font-size:15.7px;color:#1b1b1b;transform:scaleX(0.839)">U...</div>
<div class="t" style="left:1601.70px;top:172.51px;font-size:15.7px;color:#1b1b1b;transform:scaleX(0.839)">F...</div>
<svg style="position:absolute;left:11.60px;top:171.70px" width="16" height="16" viewBox="0 0 16 16"><rect x="0.9" y="0.9" width="14.2" height="14.2" fill="#fff" stroke="#545454" stroke-width="1.4"/><path d="M3.4 8 L6.6 11.3 L12.8 4.6" fill="none" stroke="#5a5a5a" stroke-width="1.35"/></svg>
<svg style="position:absolute;left:51.40px;top:171.70px" width="16" height="16" viewBox="0 0 16 16"><rect x="0.9" y="0.9" width="14.2" height="14.2" fill="#fff" stroke="#545454" stroke-width="1.4"/></svg>
<svg style="position:absolute;left:1338.20px;top:171.70px" width="16" height="16" viewBox="0 0 16 16"><rect x="0.9" y="0.9" width="14.2" height="14.2" fill="#fff" stroke="#545454" stroke-width="1.4"/><path d="M3.4 8 L6.6 11.3 L12.8 4.6" fill="none" stroke="#5a5a5a" stroke-width="1.35"/></svg>
<div style="position:absolute;left:0;top:191.14px;width:1623.5px;height:21.24px;background:#f2f2f2"></div>
<div style="position:absolute;left:0;top:211.38px;width:1623.5px;height:0;border-top:1px dotted #c2c2c2"></div>
<div class="t" style="left:85.80px;top:193.74px;font-size:15.7px;color:#1b1b1b;transform:scaleX(0.839)">Krankenkasse</div>
<div class="t" style="left:288.60px;top:193.74px;font-size:15.7px;color:#1b1b1b;transform:scaleX(0.90612)">511216</div>
<div class="t" style="left:374.30px;top:193.74px;font-size:15.7px;color:#1b1b1b;transform:scaleX(0.839)">Hunold</div>
<div class="t" style="left:584.50px;top:193.74px;font-size:15.7px;color:#1b1b1b;transform:scaleX(0.839)">Umberto</div>
<div class="t" style="left:710.40px;top:193.74px;font-size:15.7px;color:#1b1b1b;transform:scaleX(0.90612)">12</div>
<div class="t" style="left:798.20px;top:193.74px;font-size:15.7px;color:#1b1b1b;transform:scaleX(0.90612)">2017</div>
<div class="t" style="left:887.00px;top:193.74px;font-size:15.7px;color:#1b1b1b;transform:scaleX(0.893535)">01.12.2017</div>
<div class="t" style="left:968.20px;top:193.74px;font-size:15.7px;color:#1b1b1b;transform:scaleX(0.893535)">31.12.2017</div>
<div class="t" style="left:1049.80px;top:193.74px;font-size:15.7px;color:#1b1b1b;transform:scaleX(0.893535)">31.12.2017</div>
<div class="t" style="left:1131.10px;top:193.74px;font-size:15.7px;color:#1b1b1b;transform:scaleX(0.87256)">204.600</div>
<div class="t" style="left:1213.20px;top:193.74px;font-size:15.7px;color:#1b1b1b;transform:scaleX(0.839)">Verbucht</div>
<div class="t" style="left:1370.50px;top:193.74px;font-size:15.7px;color:#1b1b1b;transform:scaleX(0.86417)">13.02.2018 10:05:27</div>
<div class="t" style="left:1573.70px;top:193.74px;font-size:15.7px;color:#1b1b1b;transform:scaleX(0.839)">K...</div>
<div class="t" style="left:1601.70px;top:193.74px;font-size:15.7px;color:#1b1b1b;transform:scaleX(0.839)">F...</div>
<svg style="position:absolute;left:11.60px;top:192.94px" width="16" height="16" viewBox="0 0 16 16"><rect x="0.9" y="0.9" width="14.2" height="14.2" fill="#fff" stroke="#545454" stroke-width="1.4"/><path d="M3.4 8 L6.6 11.3 L12.8 4.6" fill="none" stroke="#5a5a5a" stroke-width="1.35"/></svg>
<svg style="position:absolute;left:51.40px;top:192.94px" width="16" height="16" viewBox="0 0 16 16"><rect x="0.9" y="0.9" width="14.2" height="14.2" fill="#fff" stroke="#545454" stroke-width="1.4"/></svg>
<svg style="position:absolute;left:1338.20px;top:192.94px" width="16" height="16" viewBox="0 0 16 16"><rect x="0.9" y="0.9" width="14.2" height="14.2" fill="#fff" stroke="#545454" stroke-width="1.4"/><path d="M3.4 8 L6.6 11.3 L12.8 4.6" fill="none" stroke="#5a5a5a" stroke-width="1.35"/></svg>
<div style="position:absolute;left:0;top:212.38px;width:1623.5px;height:21.24px;background:#ffffff"></div>
<div style="position:absolute;left:0;top:232.62px;width:1623.5px;height:0;border-top:1px dotted #c2c2c2"></div>
<div class="t" style="left:85.80px;top:214.98px;font-size:15.7px;color:#1b1b1b;transform:scaleX(0.839)">Krankenkasse</div>
<div class="t" style="left:288.60px;top:214.98px;font-size:15.7px;color:#1b1b1b;transform:scaleX(0.90612)">511217</div>
<div class="t" style="left:374.30px;top:214.98px;font-size:15.7px;color:#1b1b1b;transform:scaleX(0.839)">Wigger-Isenschmid</div>
<div class="t" style="left:584.50px;top:214.98px;font-size:15.7px;color:#1b1b1b;transform:scaleX(0.839)">Begõna</div>
<div class="t" style="left:710.40px;top:214.98px;font-size:15.7px;color:#1b1b1b;transform:scaleX(0.90612)">12</div>
<div class="t" style="left:798.20px;top:214.98px;font-size:15.7px;color:#1b1b1b;transform:scaleX(0.90612)">2017</div>
<div class="t" style="left:887.00px;top:214.98px;font-size:15.7px;color:#1b1b1b;transform:scaleX(0.893535)">01.12.2017</div>
<div class="t" style="left:968.20px;top:214.98px;font-size:15.7px;color:#1b1b1b;transform:scaleX(0.893535)">31.12.2017</div>
<div class="t" style="left:1049.80px;top:214.98px;font-size:15.7px;color:#1b1b1b;transform:scaleX(0.893535)">31.12.2017</div>
<div class="t" style="left:1131.10px;top:214.98px;font-size:15.7px;color:#1b1b1b;transform:scaleX(0.87256)">1215.950</div>
<div class="t" style="left:1213.20px;top:214.98px;font-size:15.7px;color:#1b1b1b;transform:scaleX(0.839)">Verbucht</div>
<div class="t" style="left:1370.50px;top:214.98px;font-size:15.7px;color:#1b1b1b;transform:scaleX(0.86417)">13.02.2018 10:05:27</div>
<div class="t" style="left:1573.70px;top:214.98px;font-size:15.7px;color:#1b1b1b;transform:scaleX(0.839)">U...</div>
<div class="t" style="left:1601.70px;top:214.98px;font-size:15.7px;color:#1b1b1b;transform:scaleX(0.839)">F...</div>
<svg style="position:absolute;left:11.60px;top:214.18px" width="16" height="16" viewBox="0 0 16 16"><rect x="0.9" y="0.9" width="14.2" height="14.2" fill="#fff" stroke="#545454" stroke-width="1.4"/><path d="M3.4 8 L6.6 11.3 L12.8 4.6" fill="none" stroke="#5a5a5a" stroke-width="1.35"/></svg>
<svg style="position:absolute;left:51.40px;top:214.18px" width="16" height="16" viewBox="0 0 16 16"><rect x="0.9" y="0.9" width="14.2" height="14.2" fill="#fff" stroke="#545454" stroke-width="1.4"/></svg>
<svg style="position:absolute;left:1338.20px;top:214.18px" width="16" height="16" viewBox="0 0 16 16"><rect x="0.9" y="0.9" width="14.2" height="14.2" fill="#fff" stroke="#545454" stroke-width="1.4"/><path d="M3.4 8 L6.6 11.3 L12.8 4.6" fill="none" stroke="#5a5a5a" stroke-width="1.35"/></svg>
<div style="position:absolute;left:0;top:233.62px;width:1623.5px;height:21.24px;background:#f2f2f2"></div>
<div style="position:absolute;left:0;top:253.86px;width:1623.5px;height:0;border-top:1px dotted #c2c2c2"></div>
<div class="t" style="left:85.80px;top:236.22px;font-size:15.7px;color:#1b1b1b;transform:scaleX(0.839)">Klientenrechnung</div>
<div class="t" style="left:288.60px;top:236.22px;font-size:15.7px;color:#1b1b1b;transform:scaleX(0.90612)">511218</div>
<div class="t" style="left:374.30px;top:236.22px;font-size:15.7px;color:#1b1b1b;transform:scaleX(0.839)">Wigger-Isenschmid</div>
<div class="t" style="left:584.50px;top:236.22px;font-size:15.7px;color:#1b1b1b;transform:scaleX(0.839)">Begõna</div>
<div class="t" style="left:710.40px;top:236.22px;font-size:15.7px;color:#1b1b1b;transform:scaleX(0.90612)">12</div>
<div class="t" style="left:798.20px;top:236.22px;font-size:15.7px;color:#1b1b1b;transform:scaleX(0.90612)">2017</div>
<div class="t" style="left:887.00px;top:236.22px;font-size:15.7px;color:#1b1b1b;transform:scaleX(0.893535)">01.12.2017</div>
<div class="t" style="left:968.20px;top:236.22px;font-size:15.7px;color:#1b1b1b;transform:scaleX(0.893535)">31.12.2017</div>
<div class="t" style="left:1049.80px;top:236.22px;font-size:15.7px;color:#1b1b1b;transform:scaleX(0.893535)">31.12.2017</div>
<div class="t" style="left:1131.10px;top:236.22px;font-size:15.7px;color:#1b1b1b;transform:scaleX(0.87256)">12.200</div>
<div class="t" style="left:1213.20px;top:236.22px;font-size:15.7px;color:#1b1b1b;transform:scaleX(0.839)">Verbucht</div>
<div class="t" style="left:1370.50px;top:236.22px;font-size:15.7px;color:#1b1b1b;transform:scaleX(0.86417)">13.02.2018 10:05:27</div>
<div class="t" style="left:1573.70px;top:236.22px;font-size:15.7px;color:#1b1b1b;transform:scaleX(0.839)">U...</div>
<div class="t" style="left:1601.70px;top:236.22px;font-size:15.7px;color:#1b1b1b;transform:scaleX(0.839)">F...</div>
<svg style="position:absolute;left:11.60px;top:235.42px" width="16" height="16" viewBox="0 0 16 16"><rect x="0.9" y="0.9" width="14.2" height="14.2" fill="#fff" stroke="#545454" stroke-width="1.4"/><path d="M3.4 8 L6.6 11.3 L12.8 4.6" fill="none" stroke="#5a5a5a" stroke-width="1.35"/></svg>
<svg style="position:absolute;left:51.40px;top:235.42px" width="16" height="16" viewBox="0 0 16 16"><rect x="0.9" y="0.9" width="14.2" height="14.2" fill="#fff" stroke="#545454" stroke-width="1.4"/></svg>
<svg style="position:absolute;left:1338.20px;top:235.42px" width="16" height="16" viewBox="0 0 16 16"><rect x="0.9" y="0.9" width="14.2" height="14.2" fill="#fff" stroke="#545454" stroke-width="1.4"/><path d="M3.4 8 L6.6 11.3 L12.8 4.6" fill="none" stroke="#5a5a5a" stroke-width="1.35"/></svg>
<div style="position:absolute;left:0;top:254.86px;width:1623.5px;height:21.24px;background:#ffffff"></div>
<div style="position:absolute;left:0;top:275.09px;width:1623.5px;height:0;border-top:1px dotted #c2c2c2"></div>
<div class="t" style="left:85.80px;top:257.46px;font-size:15.7px;color:#1b1b1b;transform:scaleX(0.839)">Krankenkasse</div>
<div class="t" style="left:288.60px;top:257.46px;font-size:15.7px;color:#1b1b1b;transform:scaleX(0.90612)">511219</div>
<div class="t" style="left:374.30px;top:257.46px;font-size:15.7px;color:#1b1b1b;transform:scaleX(0.839)">Fessler</div>
<div class="t" style="left:584.50px;top:257.46px;font-size:15.7px;color:#1b1b1b;transform:scaleX(0.839)">Joy</div>
<div class="t" style="left:710.40px;top:257.46px;font-size:15.7px;color:#1b1b1b;transform:scaleX(0.90612)">12</div>
<div class="t" style="left:798.20px;top:257.46px;font-size:15.7px;color:#1b1b1b;transform:scaleX(0.90612)">2017</div>
<div class="t" style="left:887.00px;top:257.46px;font-size:15.7px;color:#1b1b1b;transform:scaleX(0.893535)">01.12.2017</div>
<div class="t" style="left:968.20px;top:257.46px;font-size:15.7px;color:#1b1b1b;transform:scaleX(0.893535)">31.12.2017</div>
<div class="t" style="left:1049.80px;top:257.46px;font-size:15.7px;color:#1b1b1b;transform:scaleX(0.893535)">31.12.2017</div>
<div class="t" style="left:1131.10px;top:257.46px;font-size:15.7px;color:#1b1b1b;transform:scaleX(0.87256)">587.300</div>
<div class="t" style="left:1213.20px;top:257.46px;font-size:15.7px;color:#1b1b1b;transform:scaleX(0.839)">Verbucht</div>
<div class="t" style="left:1370.50px;top:257.46px;font-size:15.7px;color:#1b1b1b;transform:scaleX(0.86417)">13.02.2018 10:05:27</div>
<div class="t" style="left:1573.70px;top:257.46px;font-size:15.7px;color:#1b1b1b;transform:scaleX(0.839)">G...</div>
<div class="t" style="left:1601.70px;top:257.46px;font-size:15.7px;color:#1b1b1b;transform:scaleX(0.839)">F...</div>
<svg style="position:absolute;left:11.60px;top:256.66px" width="16" height="16" viewBox="0 0 16 16"><rect x="0.9" y="0.9" width="14.2" height="14.2" fill="#fff" stroke="#545454" stroke-width="1.4"/><path d="M3.4 8 L6.6 11.3 L12.8 4.6" fill="none" stroke="#5a5a5a" stroke-width="1.35"/></svg>
<svg style="position:absolute;left:51.40px;top:256.66px" width="16" height="16" viewBox="0 0 16 16"><rect x="0.9" y="0.9" width="14.2" height="14.2" fill="#fff" stroke="#545454" stroke-width="1.4"/></svg>
<svg style="position:absolute;left:1338.20px;top:256.66px" width="16" height="16" viewBox="0 0 16 16"><rect x="0.9" y="0.9" width="14.2" height="14.2" fill="#fff" stroke="#545454" stroke-width="1.4"/><path d="M3.4 8 L6.6 11.3 L12.8 4.6" fill="none" stroke="#5a5a5a" stroke-width="1.35"/></svg>
<div style="position:absolute;left:0;top:276.09px;width:1623.5px;height:21.24px;background:#f2f2f2"></div>
<div style="position:absolute;left:0;top:296.33px;width:1623.5px;height:0;border-top:1px dotted #c2c2c2"></div>
<div class="t" style="left:85.80px;top:278.70px;font-size:15.7px;color:#1b1b1b;transform:scaleX(0.839)">Krankenkasse</div>
<div class="t" style="left:288.60px;top:278.70px;font-size:15.7px;color:#1b1b1b;transform:scaleX(0.90612)">511220</div>
<div class="t" style="left:374.30px;top:278.70px;font-size:15.7px;color:#1b1b1b;transform:scaleX(0.839)">Blass</div>
<div class="t" style="left:584.50px;top:278.70px;font-size:15.7px;color:#1b1b1b;transform:scaleX(0.839)">Ahmed</div>
<div class="t" style="left:710.40px;top:278.70px;font-size:15.7px;color:#1b1b1b;transform:scaleX(0.90612)">12</div>
<div class="t" style="left:798.20px;top:278.70px;font-size:15.7px;color:#1b1b1b;transform:scaleX(0.90612)">2017</div>
<div class="t" style="left:887.00px;top:278.70px;font-size:15.7px;color:#1b1b1b;transform:scaleX(0.893535)">01.12.2017</div>
<div class="t" style="left:968.20px;top:278.70px;font-size:15.7px;color:#1b1b1b;transform:scaleX(0.893535)">31.12.2017</div>
<div class="t" style="left:1049.80px;top:278.70px;font-size:15.7px;color:#1b1b1b;transform:scaleX(0.893535)">31.12.2017</div>
<div class="t" style="left:1131.10px;top:278.70px;font-size:15.7px;color:#1b1b1b;transform:scaleX(0.87256)">523.950</div>
<div class="t" style="left:1213.20px;top:278.70px;font-size:15.7px;color:#1b1b1b;transform:scaleX(0.839)">Verbucht</div>
<div class="t" style="left:1370.50px;top:278.70px;font-size:15.7px;color:#1b1b1b;transform:scaleX(0.86417)">13.02.2018 10:05:27</div>
<div class="t" style="left:1573.70px;top:278.70px;font-size:15.7px;color:#1b1b1b;transform:scaleX(0.839)">L...</div>
<div class="t" style="left:1601.70px;top:278.70px;font-size:15.7px;color:#1b1b1b;transform:scaleX(0.839)">F...</div>
<svg style="position:absolute;left:11.60px;top:277.89px" width="16" height="16" viewBox="0 0 16 16"><rect x="0.9" y="0.9" width="14.2" height="14.2" fill="#fff" stroke="#545454" stroke-width="1.4"/><path d="M3.4 8 L6.6 11.3 L12.8 4.6" fill="none" stroke="#5a5a5a" stroke-width="1.35"/></svg>
<svg style="position:absolute;left:51.40px;top:277.89px" width="16" height="16" viewBox="0 0 16 16"><rect x="0.9" y="0.9" width="14.2" height="14.2" fill="#fff" stroke="#545454" stroke-width="1.4"/></svg>
<svg style="position:absolute;left:1338.20px;top:277.89px" width="16" height="16" viewBox="0 0 16 16"><rect x="0.9" y="0.9" width="14.2" height="14.2" fill="#fff" stroke="#545454" stroke-width="1.4"/><path d="M3.4 8 L6.6 11.3 L12.8 4.6" fill="none" stroke="#5a5a5a" stroke-width="1.35"/></svg>
<div style="position:absolute;left:0;top:297.33px;width:1623.5px;height:21.24px;background:#ffffff"></div>
<div style="position:absolute;left:0;top:317.57px;width:1623.5px;height:0;border-top:1px dotted #c2c2c2"></div>
<div class="t" style="left:85.80px;top:299.93px;font-size:15.7px;color:#1b1b1b;transform:scaleX(0.839)">Krankenkasse</div>
<div class="t" style="left:288.60px;top:299.93px;font-size:15.7px;color:#1b1b1b;transform:scaleX(0.90612)">511221</div>
<div class="t" style="left:374.30px;top:299.93px;font-size:15.7px;color:#1b1b1b;transform:scaleX(0.839)">Sgier-Derungs</div>
<div class="t" style="left:584.50px;top:299.93px;font-size:15.7px;color:#1b1b1b;transform:scaleX(0.839)">Denis</div>
<div class="t" style="left:710.40px;top:299.93px;font-size:15.7px;color:#1b1b1b;transform:scaleX(0.90612)">12</div>
<div class="t" style="left:798.20px;top:299.93px;font-size:15.7px;color:#1b1b1b;transform:scaleX(0.90612)">2017</div>
<div class="t" style="left:887.00px;top:299.93px;font-size:15.7px;color:#1b1b1b;transform:scaleX(0.893535)">01.12.2017</div>
<div class="t" style="left:968.20px;top:299.93px;font-size:15.7px;color:#1b1b1b;transform:scaleX(0.893535)">31.12.2017</div>
<div class="t" style="left:1049.80px;top:299.93px;font-size:15.7px;color:#1b1b1b;transform:scaleX(0.893535)">31.12.2017</div>
<div class="t" style="left:1131.10px;top:299.93px;font-size:15.7px;color:#1b1b1b;transform:scaleX(0.87256)">530.750</div>
<div class="t" style="left:1213.20px;top:299.93px;font-size:15.7px;color:#1b1b1b;transform:scaleX(0.839)">Verbucht</div>
<div class="t" style="left:1370.50px;top:299.93px;font-size:15.7px;color:#1b1b1b;transform:scaleX(0.86417)">13.02.2018 10:05:27</div>
<div class="t" style="left:1573.70px;top:299.93px;font-size:15.7px;color:#1b1b1b;transform:scaleX(0.839)">U...</div>
<div class="t" style="left:1601.70px;top:299.93px;font-size:15.7px;color:#1b1b1b;transform:scaleX(0.839)">F...</div>
<svg style="position:absolute;left:11.60px;top:299.13px" width="16" height="16" viewBox="0 0 16 16"><rect x="0.9" y="0.9" width="14.2" height="14.2" fill="#fff" stroke="#545454" stroke-width="1.4"/><path d="M3.4 8 L6.6 11.3 L12.8 4.6" fill="none" stroke="#5a5a5a" stroke-width="1.35"/></svg>
<svg style="position:absolute;left:51.40px;top:299.13px" width="16" height="16" viewBox="0 0 16 16"><rect x="0.9" y="0.9" width="14.2" height="14.2" fill="#fff" stroke="#545454" stroke-width="1.4"/></svg>
<svg style="position:absolute;left:1338.20px;top:299.13px" width="16" height="16" viewBox="0 0 16 16"><rect x="0.9" y="0.9" width="14.2" height="14.2" fill="#fff" stroke="#545454" stroke-width="1.4"/><path d="M3.4 8 L6.6 11.3 L12.8 4.6" fill="none" stroke="#5a5a5a" stroke-width="1.35"/></svg>
<div style="position:absolute;left:0;top:318.57px;width:1623.5px;height:21.24px;background:#f2f2f2"></div>
<div style="position:absolute;left:0;top:338.81px;width:1623.5px;height:0;border-top:1px dotted #c2c2c2"></div>
<div class="t" style="left:85.80px;top:321.17px;font-size:15.7px;color:#1b1b1b;transform:scaleX(0.839)">Krankenkasse</div>
<div class="t" style="left:288.60px;top:321.17px;font-size:15.7px;color:#1b1b1b;transform:scaleX(0.90612)">511222</div>
<div class="t" style="left:374.30px;top:321.17px;font-size:15.7px;color:#1b1b1b;transform:scaleX(0.839)">Weber-Hintermann</div>
<div class="t" style="left:584.50px;top:321.17px;font-size:15.7px;color:#1b1b1b;transform:scaleX(0.839)">Mady</div>
<div class="t" style="left:710.40px;top:321.17px;font-size:15.7px;color:#1b1b1b;transform:scaleX(0.90612)">12</div>
<div class="t" style="left:798.20px;top:321.17px;font-size:15.7px;color:#1b1b1b;transform:scaleX(0.90612)">2017</div>
<div class="t" style="left:887.00px;top:321.17px;font-size:15.7px;color:#1b1b1b;transform:scaleX(0.893535)">01.12.2017</div>
<div class="t" style="left:968.20px;top:321.17px;font-size:15.7px;color:#1b1b1b;transform:scaleX(0.893535)">31.12.2017</div>
<div class="t" style="left:1049.80px;top:321.17px;font-size:15.7px;color:#1b1b1b;transform:scaleX(0.893535)">31.12.2017</div>
<div class="t" style="left:1131.10px;top:321.17px;font-size:15.7px;color:#1b1b1b;transform:scaleX(0.87256)">291.200</div>
<div class="t" style="left:1213.20px;top:321.17px;font-size:15.7px;color:#1b1b1b;transform:scaleX(0.839)">Verbucht</div>
<div class="t" style="left:1370.50px;top:321.17px;font-size:15.7px;color:#1b1b1b;transform:scaleX(0.86417)">13.02.2018 10:05:27</div>
<div class="t" style="left:1573.70px;top:321.17px;font-size:15.7px;color:#1b1b1b;transform:scaleX(0.839)">G...</div>
<div class="t" style="left:1601.70px;top:321.17px;font-size:15.7px;color:#1b1b1b;transform:scaleX(0.839)">F...</div>
<svg style="position:absolute;left:11.60px;top:320.37px" width="16" height="16" viewBox="0 0 16 16"><rect x="0.9" y="0.9" width="14.2" height="14.2" fill="#fff" stroke="#545454" stroke-width="1.4"/><path d="M3.4 8 L6.6 11.3 L12.8 4.6" fill="none" stroke="#5a5a5a" stroke-width="1.35"/></svg>
<svg style="position:absolute;left:51.40px;top:320.37px" width="16" height="16" viewBox="0 0 16 16"><rect x="0.9" y="0.9" width="14.2" height="14.2" fill="#fff" stroke="#545454" stroke-width="1.4"/></svg>
<svg style="position:absolute;left:1338.20px;top:320.37px" width="16" height="16" viewBox="0 0 16 16"><rect x="0.9" y="0.9" width="14.2" height="14.2" fill="#fff" stroke="#545454" stroke-width="1.4"/><path d="M3.4 8 L6.6 11.3 L12.8 4.6" fill="none" stroke="#5a5a5a" stroke-width="1.35"/></svg>
<div style="position:absolute;left:0;top:339.81px;width:1623.5px;height:21.24px;background:#ffffff"></div>
<div style="position:absolute;left:0;top:360.05px;width:1623.5px;height:0;border-top:1px dotted #c2c2c2"></div>
<div class="t" style="left:85.80px;top:342.41px;font-size:15.7px;color:#1b1b1b;transform:scaleX(0.839)">Krankenkasse</div>
<div class="t" style="left:288.60px;top:342.41px;font-size:15.7px;color:#1b1b1b;transform:scaleX(0.90612)">511223</div>
<div class="t" style="left:374.30px;top:342.41px;font-size:15.7px;color:#1b1b1b;transform:scaleX(0.839)">Luck</div>
<div class="t" style="left:584.50px;top:342.41px;font-size:15.7px;color:#1b1b1b;transform:scaleX(0.839)">Francesco</div>
<div class="t" style="left:710.40px;top:342.41px;font-size:15.7px;color:#1b1b1b;transform:scaleX(0.90612)">12</div>
<div class="t" style="left:798.20px;top:342.41px;font-size:15.7px;color:#1b1b1b;transform:scaleX(0.90612)">2017</div>
<div class="t" style="left:887.00px;top:342.41px;font-size:15.7px;color:#1b1b1b;transform:scaleX(0.893535)">01.12.2017</div>
<div class="t" style="left:968.20px;top:342.41px;font-size:15.7px;color:#1b1b1b;transform:scaleX(0.893535)">31.12.2017</div>
<div class="t" style="left:1049.80px;top:342.41px;font-size:15.7px;color:#1b1b1b;transform:scaleX(0.893535)">31.12.2017</div>
<div class="t" style="left:1131.10px;top:342.41px;font-size:15.7px;color:#1b1b1b;transform:scaleX(0.87256)">357.450</div>
<div class="t" style="left:1213.20px;top:342.41px;font-size:15.7px;color:#1b1b1b;transform:scaleX(0.839)">Verbucht</div>
<div class="t" style="left:1370.50px;top:342.41px;font-size:15.7px;color:#1b1b1b;transform:scaleX(0.86417)">13.02.2018 10:05:27</div>
<div class="t" style="left:1573.70px;top:342.41px;font-size:15.7px;color:#1b1b1b;transform:scaleX(0.839)">G...</div>
<div class="t" style="left:1601.70px;top:342.41px;font-size:15.7px;color:#1b1b1b;transform:scaleX(0.839)">F...</div>
<svg style="position:absolute;left:11.60px;top:341.61px" width="16" height="16" viewBox="0 0 16 16"><rect x="0.9" y="0.9" width="14.2" height="14.2" fill="#fff" stroke="#545454" stroke-width="1.4"/><path d="M3.4 8 L6.6 11.3 L12.8 4.6" fill="none" stroke="#5a5a5a" stroke-width="1.35"/></svg>
<svg style="position:absolute;left:51.40px;top:341.61px" width="16" height="16" viewBox="0 0 16 16"><rect x="0.9" y="0.9" width="14.2" height="14.2" fill="#fff" stroke="#545454" stroke-width="1.4"/></svg>
<svg style="position:absolute;left:1338.20px;top:341.61px" width="16" height="16" viewBox="0 0 16 16"><rect x="0.9" y="0.9" width="14.2" height="14.2" fill="#fff" stroke="#545454" stroke-width="1.4"/><path d="M3.4 8 L6.6 11.3 L12.8 4.6" fill="none" stroke="#5a5a5a" stroke-width="1.35"/></svg>
<div style="position:absolute;left:0;top:361.05px;width:1623.5px;height:21.24px;background:#f2f2f2"></div>
<div style="position:absolute;left:0;top:381.28px;width:1623.5px;height:0;border-top:1px dotted #c2c2c2"></div>
<div class="t" style="left:85.80px;top:363.65px;font-size:15.7px;color:#1b1b1b;transform:scaleX(0.839)">Klientenrechnung</div>
<div class="t" style="left:288.60px;top:363.65px;font-size:15.7px;color:#1b1b1b;transform:scaleX(0.90612)">511224</div>
<div class="t" style="left:374.30px;top:363.65px;font-size:15.7px;color:#1b1b1b;transform:scaleX(0.839)">Luck</div>
<div class="t" style="left:584.50px;top:363.65px;font-size:15.7px;color:#1b1b1b;transform:scaleX(0.839)">Francesco</div>
<div class="t" style="left:710.40px;top:363.65px;font-size:15.7px;color:#1b1b1b;transform:scaleX(0.90612)">12</div>
<div class="t" style="left:798.20px;top:363.65px;font-size:15.7px;color:#1b1b1b;transform:scaleX(0.90612)">2017</div>
<div class="t" style="left:887.00px;top:363.65px;font-size:15.7px;color:#1b1b1b;transform:scaleX(0.893535)">01.12.2017</div>
<div class="t" style="left:968.20px;top:363.65px;font-size:15.7px;color:#1b1b1b;transform:scaleX(0.893535)">31.12.2017</div>
<div class="t" style="left:1049.80px;top:363.65px;font-size:15.7px;color:#1b1b1b;transform:scaleX(0.893535)">31.12.2017</div>
<div class="t" style="left:1131.10px;top:363.65px;font-size:15.7px;color:#1b1b1b;transform:scaleX(0.87256)">57.200</div>
<div class="t" style="left:1213.20px;top:363.65px;font-size:15.7px;color:#1b1b1b;transform:scaleX(0.839)">Verbucht</div>
<div class="t" style="left:1370.50px;top:363.65px;font-size:15.7px;color:#1b1b1b;transform:scaleX(0.86417)">13.02.2018 10:05:27</div>
<div class="t" style="left:1573.70px;top:363.65px;font-size:15.7px;color:#1b1b1b;transform:scaleX(0.839)">G...</div>
<div class="t" style="left:1601.70px;top:363.65px;font-size:15.7px;color:#1b1b1b;transform:scaleX(0.839)">F...</div>
<svg style="position:absolute;left:11.60px;top:362.85px" width="16" height="16" viewBox="0 0 16 16"><rect x="0.9" y="0.9" width="14.2" height="14.2" fill="#fff" stroke="#545454" stroke-width="1.4"/><path d="M3.4 8 L6.6 11.3 L12.8 4.6" fill="none" stroke="#5a5a5a" stroke-width="1.35"/></svg>
<svg style="position:absolute;left:51.40px;top:362.85px" width="16" height="16" viewBox="0 0 16 16"><rect x="0.9" y="0.9" width="14.2" height="14.2" fill="#fff" stroke="#545454" stroke-width="1.4"/></svg>
<svg style="position:absolute;left:1338.20px;top:362.85px" width="16" height="16" viewBox="0 0 16 16"><rect x="0.9" y="0.9" width="14.2" height="14.2" fill="#fff" stroke="#545454" stroke-width="1.4"/><path d="M3.4 8 L6.6 11.3 L12.8 4.6" fill="none" stroke="#5a5a5a" stroke-width="1.35"/></svg>
<div style="position:absolute;left:0;top:382.28px;width:1623.5px;height:21.24px;background:#ffffff"></div>
<div style="position:absolute;left:0;top:402.52px;width:1623.5px;height:0;border-top:1px dotted #c2c2c2"></div>
<div class="t" style="left:85.80px;top:384.89px;font-size:15.7px;color:#1b1b1b;transform:scaleX(0.839)">Krankenkasse</div>
<div class="t" style="left:288.60px;top:384.89px;font-size:15.7px;color:#1b1b1b;transform:scaleX(0.90612)">511225</div>
<div class="t" style="left:374.30px;top:384.89px;font-size:15.7px;color:#1b1b1b;transform:scaleX(0.839)">Weidenmann</div>
<div class="t" style="left:584.50px;top:384.89px;font-size:15.7px;color:#1b1b1b;transform:scaleX(0.839)">Bastien</div>
<div class="t" style="left:710.40px;top:384.89px;font-size:15.7px;color:#1b1b1b;transform:scaleX(0.90612)">12</div>
<div class="t" style="left:798.20px;top:384.89px;font-size:15.7px;color:#1b1b1b;transform:scaleX(0.90612)">2017</div>
<div class="t" style="left:887.00px;top:384.89px;font-size:15.7px;color:#1b1b1b;transform:scaleX(0.893535)">01.12.2017</div>
<div class="t" style="left:968.20px;top:384.89px;font-size:15.7px;color:#1b1b1b;transform:scaleX(0.893535)">31.12.2017</div>
<div class="t" style="left:1049.80px;top:384.89px;font-size:15.7px;color:#1b1b1b;transform:scaleX(0.893535)">31.12.2017</div>
<div class="t" style="left:1131.10px;top:384.89px;font-size:15.7px;color:#1b1b1b;transform:scaleX(0.87256)">553.400</div>
<div class="t" style="left:1213.20px;top:384.89px;font-size:15.7px;color:#1b1b1b;transform:scaleX(0.839)">Verbucht</div>
<div class="t" style="left:1370.50px;top:384.89px;font-size:15.7px;color:#1b1b1b;transform:scaleX(0.86417)">13.02.2018 10:05:27</div>
<div class="t" style="left:1573.70px;top:384.89px;font-size:15.7px;color:#1b1b1b;transform:scaleX(0.839)">R...</div>
<div class="t" style="left:1601.70px;top:384.89px;font-size:15.7px;color:#1b1b1b;transform:scaleX(0.839)">F...</div>
<svg style="position:absolute;left:11.60px;top:384.08px" width="16" height="16" viewBox="0 0 16 16"><rect x="0.9" y="0.9" width="14.2" height="14.2" fill="#fff" stroke="#545454" stroke-width="1.4"/><path d="M3.4 8 L6.6 11.3 L12.8 4.6" fill="none" stroke="#5a5a5a" stroke-width="1.35"/></svg>
<svg style="position:absolute;left:51.40px;top:384.08px" width="16" height="16" viewBox="0 0 16 16"><rect x="0.9" y="0.9" width="14.2" height="14.2" fill="#fff" stroke="#545454" stroke-width="1.4"/></svg>
<svg style="position:absolute;left:1338.20px;top:384.08px" width="16" height="16" viewBox="0 0 16 16"><rect x="0.9" y="0.9" width="14.2" height="14.2" fill="#fff" stroke="#545454" stroke-width="1.4"/><path d="M3.4 8 L6.6 11.3 L12.8 4.6" fill="none" stroke="#5a5a5a" stroke-width="1.35"/></svg>
<div style="position:absolute;left:0;top:403.52px;width:1623.5px;height:21.24px;background:#f2f2f2"></div>
<div style="position:absolute;left:0;top:423.76px;width:1623.5px;height:0;border-top:1px dotted #c2c2c2"></div>
<div class="t" style="left:85.80px;top:406.12px;font-size:15.7px;color:#1b1b1b;transform:scaleX(0.839)">Krankenkasse</div>
<div class="t" style="left:288.60px;top:406.12px;font-size:15.7px;color:#1b1b1b;transform:scaleX(0.90612)">511226</div>
<div class="t" style="left:374.30px;top:406.12px;font-size:15.7px;color:#1b1b1b;transform:scaleX(0.839)">Gloor-Bürgi</div>
<div class="t" style="left:584.50px;top:406.12px;font-size:15.7px;color:#1b1b1b;transform:scaleX(0.839)">Macrina</div>
<div class="t" style="left:710.40px;top:406.12px;font-size:15.7px;color:#1b1b1b;transform:scaleX(0.90612)">12</div>
<div class="t" style="left:798.20px;top:406.12px;font-size:15.7px;color:#1b1b1b;transform:scaleX(0.90612)">2017</div>
<div class="t" style="left:887.00px;top:406.12px;font-size:15.7px;color:#1b1b1b;transform:scaleX(0.893535)">01.12.2017</div>
<div class="t" style="left:968.20px;top:406.12px;font-size:15.7px;color:#1b1b1b;transform:scaleX(0.893535)">31.12.2017</div>
<div class="t" style="left:1049.80px;top:406.12px;font-size:15.7px;color:#1b1b1b;transform:scaleX(0.893535)">31.12.2017</div>
<div class="t" style="left:1131.10px;top:406.12px;font-size:15.7px;color:#1b1b1b;transform:scaleX(0.87256)">125.250</div>
<div class="t" style="left:1213.20px;top:406.12px;font-size:15.7px;color:#1b1b1b;transform:scaleX(0.839)">Verbucht</div>
<div class="t" style="left:1370.50px;top:406.12px;font-size:15.7px;color:#1b1b1b;transform:scaleX(0.86417)">13.02.2018 10:05:27</div>
<div class="t" style="left:1573.70px;top:406.12px;font-size:15.7px;color:#1b1b1b;transform:scaleX(0.839)">G...</div>
<div class="t" style="left:1601.70px;top:406.12px;font-size:15.7px;color:#1b1b1b;transform:scaleX(0.839)">F...</div>
<svg style="position:absolute;left:11.60px;top:405.32px" width="16" height="16" viewBox="0 0 16 16"><rect x="0.9" y="0.9" width="14.2" height="14.2" fill="#fff" stroke="#545454" stroke-width="1.4"/><path d="M3.4 8 L6.6 11.3 L12.8 4.6" fill="none" stroke="#5a5a5a" stroke-width="1.35"/></svg>
<svg style="position:absolute;left:51.40px;top:405.32px" width="16" height="16" viewBox="0 0 16 16"><rect x="0.9" y="0.9" width="14.2" height="14.2" fill="#fff" stroke="#545454" stroke-width="1.4"/></svg>
<svg style="position:absolute;left:1338.20px;top:405.32px" width="16" height="16" viewBox="0 0 16 16"><rect x="0.9" y="0.9" width="14.2" height="14.2" fill="#fff" stroke="#545454" stroke-width="1.4"/><path d="M3.4 8 L6.6 11.3 L12.8 4.6" fill="none" stroke="#5a5a5a" stroke-width="1.35"/></svg>
<div style="position:absolute;left:0;top:424.76px;width:1623.5px;height:21.24px;background:#ffffff"></div>
<div style="position:absolute;left:0;top:445.00px;width:1623.5px;height:0;border-top:1px dotted #c2c2c2"></div>
<div class="t" style="left:85.80px;top:427.36px;font-size:15.7px;color:#1b1b1b;transform:scaleX(0.839)">Klientenrechnung</div>
<div class="t" style="left:288.60px;top:427.36px;font-size:15.7px;color:#1b1b1b;transform:scaleX(0.90612)">511227</div>
<div class="t" style="left:374.30px;top:427.36px;font-size:15.7px;color:#1b1b1b;transform:scaleX(0.839)">Gloor-Bürgi</div>
<div class="t" style="left:584.50px;top:427.36px;font-size:15.7px;color:#1b1b1b;transform:scaleX(0.839)">Macrina</div>
<div class="t" style="left:710.40px;top:427.36px;font-size:15.7px;color:#1b1b1b;transform:scaleX(0.90612)">12</div>
<div class="t" style="left:798.20px;top:427.36px;font-size:15.7px;color:#1b1b1b;transform:scaleX(0.90612)">2017</div>
<div class="t" style="left:887.00px;top:427.36px;font-size:15.7px;color:#1b1b1b;transform:scaleX(0.893535)">01.12.2017</div>
<div class="t" style="left:968.20px;top:427.36px;font-size:15.7px;color:#1b1b1b;transform:scaleX(0.893535)">31.12.2017</div>
<div class="t" style="left:1049.80px;top:427.36px;font-size:15.7px;color:#1b1b1b;transform:scaleX(0.893535)">31.12.2017</div>
<div class="t" style="left:1131.10px;top:427.36px;font-size:15.7px;color:#1b1b1b;transform:scaleX(0.87256)">10.000</div>
<div class="t" style="left:1213.20px;top:427.36px;font-size:15.7px;color:#1b1b1b;transform:scaleX(0.839)">Verbucht</div>
<div class="t" style="left:1370.50px;top:427.36px;font-size:15.7px;color:#1b1b1b;transform:scaleX(0.86417)">13.02.2018 10:05:27</div>
<div class="t" style="left:1573.70px;top:427.36px;font-size:15.7px;color:#1b1b1b;transform:scaleX(0.839)">G...</div>
<div class="t" style="left:1601.70px;top:427.36px;font-size:15.7px;color:#1b1b1b;transform:scaleX(0.839)">F...</div>
<svg style="position:absolute;left:11.60px;top:426.56px" width="16" height="16" viewBox="0 0 16 16"><rect x="0.9" y="0.9" width="14.2" height="14.2" fill="#fff" stroke="#545454" stroke-width="1.4"/><path d="M3.4 8 L6.6 11.3 L12.8 4.6" fill="none" stroke="#5a5a5a" stroke-width="1.35"/></svg>
<svg style="position:absolute;left:51.40px;top:426.56px" width="16" height="16" viewBox="0 0 16 16"><rect x="0.9" y="0.9" width="14.2" height="14.2" fill="#fff" stroke="#545454" stroke-width="1.4"/></svg>
<svg style="position:absolute;left:1338.20px;top:426.56px" width="16" height="16" viewBox="0 0 16 16"><rect x="0.9" y="0.9" width="14.2" height="14.2" fill="#fff" stroke="#545454" stroke-width="1.4"/><path d="M3.4 8 L6.6 11.3 L12.8 4.6" fill="none" stroke="#5a5a5a" stroke-width="1.35"/></svg>
<div style="position:absolute;left:0;top:446.00px;width:1623.5px;height:21.24px;background:#f2f2f2"></div>
<div style="position:absolute;left:0;top:466.24px;width:1623.5px;height:0;border-top:1px dotted #c2c2c2"></div>
<div class="t" style="left:85.80px;top:448.60px;font-size:15.7px;color:#1b1b1b;transform:scaleX(0.839)">Krankenkasse</div>
<div class="t" style="left:288.60px;top:448.60px;font-size:15.7px;color:#1b1b1b;transform:scaleX(0.90612)">511228</div>
<div class="t" style="left:374.30px;top:448.60px;font-size:15.7px;color:#1b1b1b;transform:scaleX(0.839)">Mülhaupt</div>
<div class="t" style="left:584.50px;top:448.60px;font-size:15.7px;color:#1b1b1b;transform:scaleX(0.839)">Signe</div>
<div class="t" style="left:710.40px;top:448.60px;font-size:15.7px;color:#1b1b1b;transform:scaleX(0.90612)">12</div>
<div class="t" style="left:798.20px;top:448.60px;font-size:15.7px;color:#1b1b1b;transform:scaleX(0.90612)">2017</div>
<div class="t" style="left:887.00px;top:448.60px;font-size:15.7px;color:#1b1b1b;transform:scaleX(0.893535)">01.12.2017</div>
<div class="t" style="left:968.20px;top:448.60px;font-size:15.7px;color:#1b1b1b;transform:scaleX(0.893535)">31.12.2017</div>
<div class="t" style="left:1049.80px;top:448.60px;font-size:15.7px;color:#1b1b1b;transform:scaleX(0.893535)">31.12.2017</div>
<div class="t" style="left:1131.10px;top:448.60px;font-size:15.7px;color:#1b1b1b;transform:scaleX(0.87256)">425.800</div>
<div class="t" style="left:1213.20px;top:448.60px;font-size:15.7px;color:#1b1b1b;transform:scaleX(0.839)">Verbucht</div>
<div class="t" style="left:1370.50px;top:448.60px;font-size:15.7px;color:#1b1b1b;transform:scaleX(0.86417)">13.02.2018 10:05:27</div>
<div class="t" style="left:1573.70px;top:448.60px;font-size:15.7px;color:#1b1b1b;transform:scaleX(0.839)">K...</div>
<div class="t" style="left:1601.70px;top:448.60px;font-size:15.7px;color:#1b1b1b;transform:scaleX(0.839)">F...</div>
<svg style="position:absolute;left:11.60px;top:447.80px" width="16" height="16" viewBox="0 0 16 16"><rect x="0.9" y="0.9" width="14.2" height="14.2" fill="#fff" stroke="#545454" stroke-width="1.4"/><path d="M3.4 8 L6.6 11.3 L12.8 4.6" fill="none" stroke="#5a5a5a" stroke-width="1.35"/></svg>
<svg style="position:absolute;left:51.40px;top:447.80px" width="16" height="16" viewBox="0 0 16 16"><rect x="0.9" y="0.9" width="14.2" height="14.2" fill="#fff" stroke="#545454" stroke-width="1.4"/></svg>
<svg style="position:absolute;left:1338.20px;top:447.80px" width="16" height="16" viewBox="0 0 16 16"><rect x="0.9" y="0.9" width="14.2" height="14.2" fill="#fff" stroke="#545454" stroke-width="1.4"/><path d="M3.4 8 L6.6 11.3 L12.8 4.6" fill="none" stroke="#5a5a5a" stroke-width="1.35"/></svg>
<div style="position:absolute;left:0;top:467.24px;width:1623.5px;height:21.24px;background:#0a78d7"></div>
<div style="position:absolute;left:0;top:487.47px;width:1623.5px;height:0;border-top:1px dotted #c2c2c2"></div>
<div class="t" style="left:85.80px;top:469.84px;font-size:15.7px;color:#ffffff;transform:scaleX(0.839)">Krankenkasse</div>
<div class="t" style="left:288.60px;top:469.84px;font-size:15.7px;color:#ffffff;transform:scaleX(0.90612)">511229</div>
<div class="t" style="left:374.30px;top:469.84px;font-size:15.7px;color:#ffffff;transform:scaleX(0.839)">Gwerder-Schriber</div>
<div class="t" style="left:584.50px;top:469.84px;font-size:15.7px;color:#ffffff;transform:scaleX(0.839)">Käte</div>
<div class="t" style="left:710.40px;top:469.84px;font-size:15.7px;color:#ffffff;transform:scaleX(0.90612)">12</div>
<div class="t" style="left:798.20px;top:469.84px;font-size:15.7px;color:#ffffff;transform:scaleX(0.90612)">2017</div>
<div class="t" style="left:887.00px;top:469.84px;font-size:15.7px;color:#ffffff;transform:scaleX(0.893535)">01.12.2017</div>
<div class="t" style="left:968.20px;top:469.84px;font-size:15.7px;color:#ffffff;transform:scaleX(0.893535)">31.12.2017</div>
<div class="t" style="left:1049.80px;top:469.84px;font-size:15.7px;color:#ffffff;transform:scaleX(0.893535)">31.12.2017</div>
<div class="t" style="left:1131.10px;top:469.84px;font-size:15.7px;color:#ffffff;transform:scaleX(0.87256)">229.450</div>
<div class="t" style="left:1213.20px;top:469.84px;font-size:15.7px;color:#ffffff;transform:scaleX(0.839)">Verbucht</div>
<div class="t" style="left:1370.50px;top:469.84px;font-size:15.7px;color:#ffffff;transform:scaleX(0.86417)">13.02.2018 10:05:27</div>
<div class="t" style="left:1573.70px;top:469.84px;font-size:15.7px;color:#ffffff;transform:scaleX(0.839)">U...</div>
<div class="t" style="left:1601.70px;top:469.84px;font-size:15.7px;color:#ffffff;transform:scaleX(0.839)">F...</div>
<svg style="position:absolute;left:11.60px;top:469.04px" width="16" height="16" viewBox="0 0 16 16"><rect x="0.9" y="0.9" width="14.2" height="14.2" fill="#fff" stroke="#545454" stroke-width="1.4"/><path d="M3.4 8 L6.6 11.3 L12.8 4.6" fill="none" stroke="#5a5a5a" stroke-width="1.35"/></svg>
<svg style="position:absolute;left:51.40px;top:469.04px" width="16" height="16" viewBox="0 0 16 16"><rect x="0.9" y="0.9" width="14.2" height="14.2" fill="#fff" stroke="#545454" stroke-width="1.4"/></svg>
<svg style="position:absolute;left:1338.20px;top:469.04px" width="16" height="16" viewBox="0 0 16 16"><rect x="0.9" y="0.9" width="14.2" height="14.2" fill="#fff" stroke="#545454" stroke-width="1.4"/><path d="M3.4 8 L6.6 11.3 L12.8 4.6" fill="none" stroke="#5a5a5a" stroke-width="1.35"/></svg>
<div style="position:absolute;left:0;top:467.24px;width:1622.5px;height:20.24px;border:1px dotted #000;box-sizing:border-box"></div>
<div style="position:absolute;left:0;top:488.47px;width:1623.5px;height:21.24px;background:#f2f2f2"></div>
<div style="position:absolute;left:0;top:508.71px;width:1623.5px;height:0;border-top:1px dotted #c2c2c2"></div>
<div class="t" style="left:85.80px;top:491.08px;font-size:15.7px;color:#1b1b1b;transform:scaleX(0.839)">Klientenrechnung</div>
<div class="t" style="left:288.60px;top:491.08px;font-size:15.7px;color:#1b1b1b;transform:scaleX(0.90612)">511230</div>
<div class="t" style="left:374.30px;top:491.08px;font-size:15.7px;color:#1b1b1b;transform:scaleX(0.839)">Gwerder-Schriber</div>
<div class="t" style="left:584.50px;top:491.08px;font-size:15.7px;color:#1b1b1b;transform:scaleX(0.839)">Käte</div>
<div class="t" style="left:710.40px;top:491.08px;font-size:15.7px;color:#1b1b1b;transform:scaleX(0.90612)">12</div>
<div class="t" style="left:798.20px;top:491.08px;font-size:15.7px;color:#1b1b1b;transform:scaleX(0.90612)">2017</div>
<div class="t" style="left:887.00px;top:491.08px;font-size:15.7px;color:#1b1b1b;transform:scaleX(0.893535)">01.12.2017</div>
<div class="t" style="left:968.20px;top:491.08px;font-size:15.7px;color:#1b1b1b;transform:scaleX(0.893535)">31.12.2017</div>
<div class="t" style="left:1049.80px;top:491.08px;font-size:15.7px;color:#1b1b1b;transform:scaleX(0.893535)">31.12.2017</div>
<div class="t" style="left:1131.10px;top:491.08px;font-size:15.7px;color:#1b1b1b;transform:scaleX(0.87256)">1.800</div>
<div class="t" style="left:1213.20px;top:491.08px;font-size:15.7px;color:#1b1b1b;transform:scaleX(0.839)">Verbucht</div>
<div class="t" style="left:1370.50px;top:491.08px;font-size:15.7px;color:#1b1b1b;transform:scaleX(0.86417)">13.02.2018 10:05:27</div>
<div class="t" style="left:1573.70px;top:491.08px;font-size:15.7px;color:#1b1b1b;transform:scaleX(0.839)">U...</div>
<div class="t" style="left:1601.70px;top:491.08px;font-size:15.7px;color:#1b1b1b;transform:scaleX(0.839)">F...</div>
<svg style="position:absolute;left:11.60px;top:490.27px" width="16" height="16" viewBox="0 0 16 16"><rect x="0.9" y="0.9" width="14.2" height="14.2" fill="#fff" stroke="#545454" stroke-width="1.4"/><path d="M3.4 8 L6.6 11.3 L12.8 4.6" fill="none" stroke="#5a5a5a" stroke-width="1.35"/></svg>
<svg style="position:absolute;left:51.40px;top:490.27px" width="16" height="16" viewBox="0 0 16 16"><rect x="0.9" y="0.9" width="14.2" height="14.2" fill="#fff" stroke="#545454" stroke-width="1.4"/></svg>
<svg style="position:absolute;left:1338.20px;top:490.27px" width="16" height="16" viewBox="0 0 16 16"><rect x="0.9" y="0.9" width="14.2" height="14.2" fill="#fff" stroke="#545454" stroke-width="1.4"/><path d="M3.4 8 L6.6 11.3 L12.8 4.6" fill="none" stroke="#5a5a5a" stroke-width="1.35"/></svg>
<div style="position:absolute;left:39.00px;top:0;width:0;height:500px;border-left:1px dotted #c2c2c2"></div>
<div style="position:absolute;left:79.00px;top:0;width:0;height:500px;border-left:1px dotted #c2c2c2"></div>
<div style="position:absolute;left:283.00px;top:0;width:0;height:500px;border-left:1px dotted #c2c2c2"></div>
<div style="position:absolute;left:368.00px;top:0;width:0;height:500px;border-left:1px dotted #c2c2c2"></div>
<div style="position:absolute;left:578.00px;top:0;width:0;height:500px;border-left:1px dotted #c2c2c2"></div>
<div style="position:absolute;left:703.50px;top:0;width:0;height:500px;border-left:1px dotted #c2c2c2"></div>
<div style="position:absolute;left:792.50px;top:0;width:0;height:500px;border-left:1px dotted #c2c2c2"></div>
<div style="position:absolute;left:881.50px;top:0;width:0;height:500px;border-left:1px dotted #c2c2c2"></div>
<div style="position:absolute;left:962.50px;top:0;width:0;height:500px;border-left:1px dotted #c2c2c2"></div>
<div style="position:absolute;left:1043.50px;top:0;width:0;height:500px;border-left:1px dotted #c2c2c2"></div>
<div style="position:absolute;left:1125.50px;top:0;width:0;height:500px;border-left:1px dotted #c2c2c2"></div>
<div style="position:absolute;left:1206.50px;top:0;width:0;height:500px;border-left:1px dotted #c2c2c2"></div>
<div style="position:absolute;left:1327.20px;top:0;width:0;height:500px;border-left:1px dotted #c2c2c2"></div>
<div style="position:absolute;left:1365.10px;top:0;width:0;height:500px;border-left:1px dotted #c2c2c2"></div>
<div style="position:absolute;left:1568.00px;top:0;width:0;height:500px;border-left:1px dotted #c2c2c2"></div>
<div style="position:absolute;left:1595.00px;top:0;width:0;height:500px;border-left:1px dotted #c2c2c2"></div>
<div style="position:absolute;left:1623.00px;top:0;width:0;height:500px;border-left:1px dotted #c2c2c2"></div>
</div>
<div class="r" style="left:1636.5px;top:313px;width:23.5px;height:526px;background:#f0f0f0"></div>
<svg class="r" style="left:1641px;top:321px" width="14" height="10" viewBox="0 0 14 10"><path d="M2 7.5 L7 2.5 L12 7.5" fill="none" stroke="#606060" stroke-width="2"/></svg>
<svg class="r" style="left:1641px;top:822px" width="14" height="10" viewBox="0 0 14 10"><path d="M2 2.5 L7 7.5 L12 2.5" fill="none" stroke="#606060" stroke-width="2"/></svg>
<div class="r" style="left:1638.5px;top:740px;width:18.5px;height:19.5px;background:#cdcdcd"></div>
<div class="t" style="left:27.30px;top:866.30px;font-size:15.7px;color:#1b1b1b;transform:scaleX(0.839);font-weight:400;">Anzahl:</div>
<div class="t" style="left:95.60px;top:866.30px;font-size:15.7px;color:#1b1b1b;transform:scaleX(0.88934);font-weight:400;">9749</div>
<div class="r" style="left:1528px;top:861px;width:122px;height:26px;background:#e1e1e1;border:1px solid #adadad;box-sizing:border-box"></div>
<div class="t" style="left:1569.50px;top:866.02px;font-size:16.5px;color:#1b1b1b;transform:scaleX(0.765);font-weight:400;">Export</div>
<div class="r" style="left:1569.5px;top:881.3px;width:8.8px;height:1.2px;background:#111"></div>
<div class="r" style="left:261px;top:21px;width:66px;height:53px;border:4px solid #ef3a3a;border-radius:5px;box-sizing:border-box"></div>
<div class="r" style="left:1520px;top:853px;width:140px;height:46px;border:4px solid #ef3a3a;border-radius:6px;box-sizing:border-box"></div>
</body></html>
